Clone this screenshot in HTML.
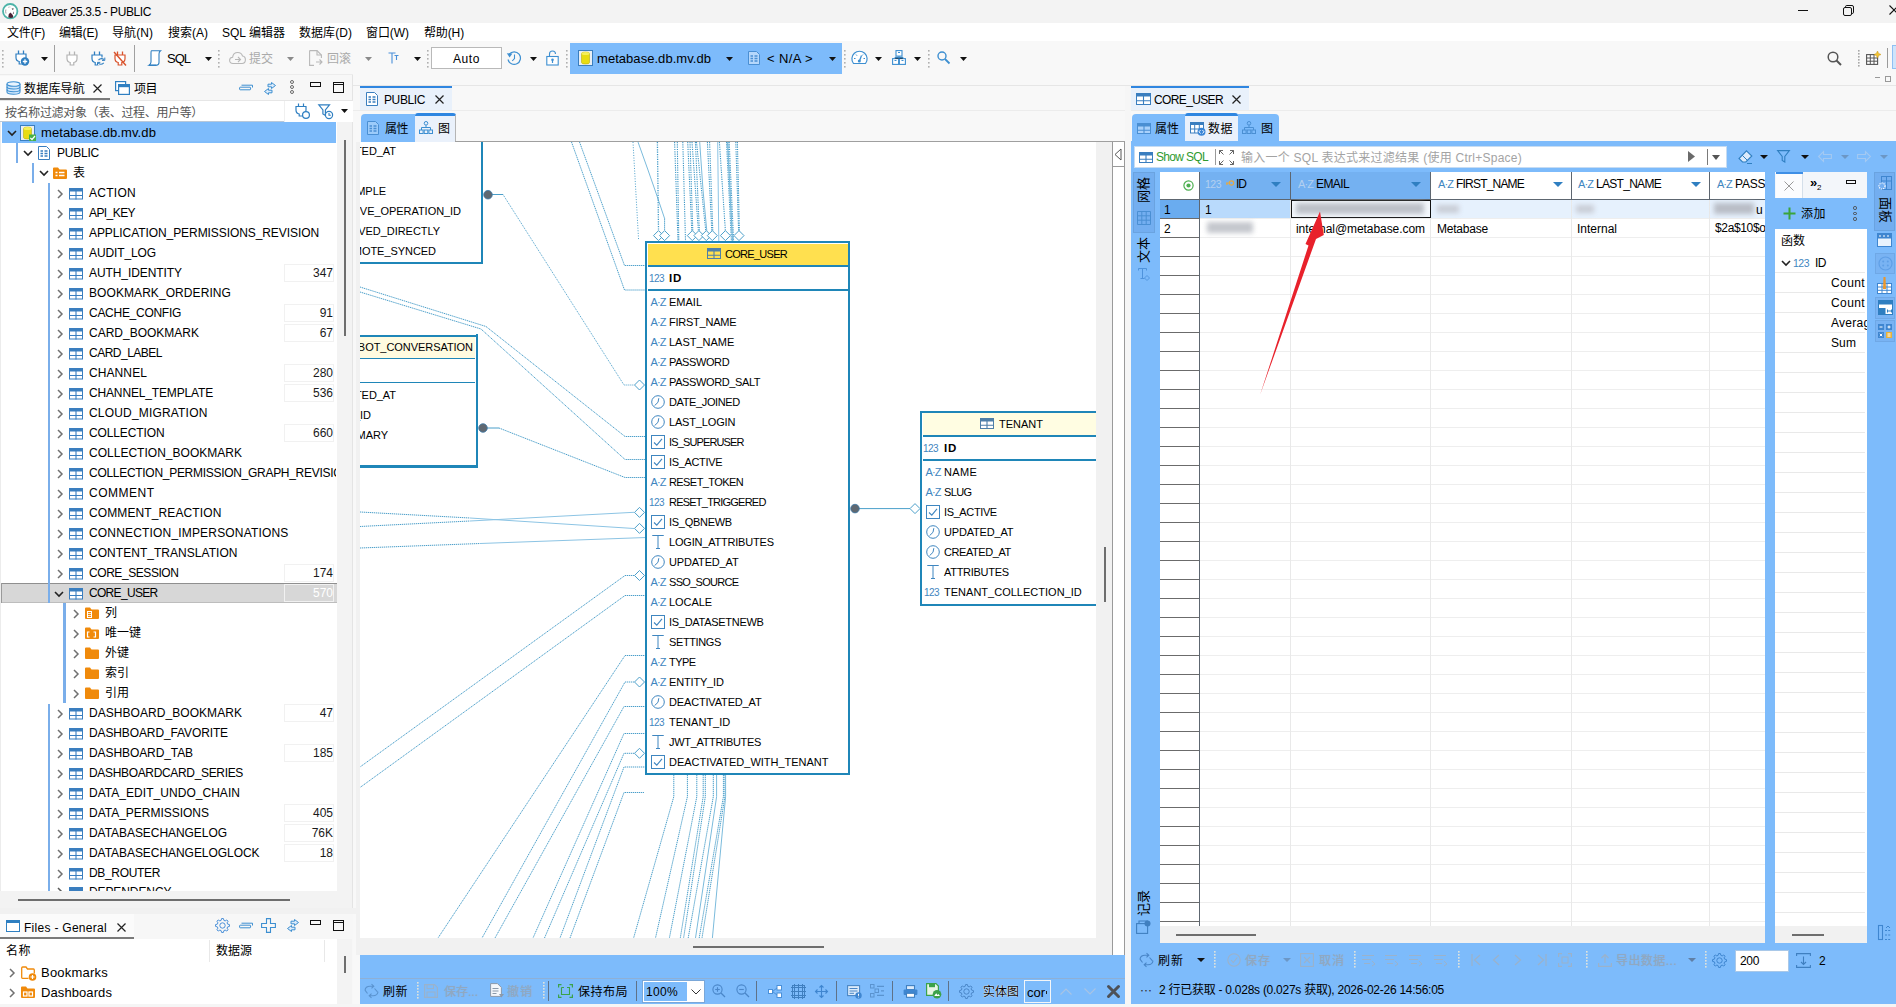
<!DOCTYPE html>
<html lang="zh-CN"><head><meta charset="utf-8"><title>DBeaver 25.3.5 - PUBLIC</title>
<style>
html,body{margin:0;padding:0}
body{width:1896px;height:1007px;overflow:hidden;position:relative;background:#f8f8f8;font-family:"Liberation Sans","Noto Sans CJK SC",sans-serif;font-size:12px}
body>div,body>span,body>svg{position:absolute}
span{white-space:pre}
svg{overflow:visible}
</style></head>
<body>
<div style="left:0px;top:0px;width:1896px;height:23px;background:#f3f3f3;"></div>
<svg style="left:2px;top:3px;" width="17" height="17" viewBox="0 0 17 17"><circle cx="8.2" cy="8.2" r="7.2" fill="#fff" stroke="#4db3a8" stroke-width="1.8"/><path d="M6.3 14.2Q6.2 11 8.3 9.6L10.2 11.2Q11.6 12.6 11 14.6Q8.5 15.6 6.3 14.2Z" fill="#4a2234"/><path d="M9.6 5.6L11.8 5.4L10.9 6.9Z" fill="#2a2226"/><path d="M10.6 10.5L12 8.3L12 11Z" fill="#7a6a70"/><path d="M3.9 6.5Q3.3 8.5 4 10.5" fill="none" stroke="#8a8a8a" stroke-width="0.8"/><path d="M6 4.5Q7.2 3.8 8.5 4" fill="none" stroke="#b0b0b0" stroke-width="0.7"/></svg>
<span style="top:4px;font-size:12px;line-height:16px;color:#000;left:23px;letter-spacing:-0.409px;">DBeaver 25.3.5 - PUBLIC</span>
<div style="left:1798px;top:10px;width:10px;height:1px;background:#111;"></div>
<svg style="left:1843px;top:5px;" width="11" height="11" viewBox="0 0 11 11"><rect x="0.5" y="2.5" width="8" height="8" rx="1.5" fill="none" stroke="#111" stroke-width="1"/><path d="M2.5 2.5V1.8Q2.5 0.5 3.8 0.5H9Q10.5 0.5 10.5 2V7.2Q10.5 8.5 9.2 8.5H8.5" fill="none" stroke="#111" stroke-width="1"/></svg>
<svg style="left:1889px;top:5px;" width="10" height="10" viewBox="0 0 10 10"><path d="M0.5 0.5L9.5 9.5M9.5 0.5L0.5 9.5" stroke="#111" stroke-width="1.1"/></svg>
<div style="left:0px;top:23px;width:1896px;height:18px;background:#fff;"></div>
<span style="top:25px;font-size:12px;line-height:16px;color:#000;left:7px;letter-spacing:-0.266px;">文件(F)</span>
<span style="top:25px;font-size:12px;line-height:16px;color:#000;left:59px;letter-spacing:-0.200px;">编辑(E)</span>
<span style="top:25px;font-size:12px;line-height:16px;color:#000;left:112px;letter-spacing:0.066px;">导航(N)</span>
<span style="top:25px;font-size:12px;line-height:16px;color:#000;left:168px;">搜索(A)</span>
<span style="top:25px;font-size:12px;line-height:16px;color:#000;left:222px;letter-spacing:0.013px;">SQL 编辑器</span>
<span style="top:25px;font-size:12px;line-height:16px;color:#000;left:299px;letter-spacing:0.055px;">数据库(D)</span>
<span style="top:25px;font-size:12px;line-height:16px;color:#000;left:366px;letter-spacing:-0.066px;">窗口(W)</span>
<span style="top:25px;font-size:12px;line-height:16px;color:#000;left:424px;letter-spacing:-0.134px;">帮助(H)</span>
<div style="left:0px;top:41px;width:1896px;height:44px;background:#f8f8f8;"></div>
<div style="left:0px;top:74px;width:353px;height:1px;background:#ececec;"></div>
<div style="left:353px;top:85px;width:1543px;height:1px;background:#e6e6e6;"></div>
<svg style="left:2px;top:50px;" width="2" height="18" viewBox="0 0 2 18"><rect x="0" y="0" width="1.6" height="1.6" fill="#b0b0b0"/><rect x="0" y="4" width="1.6" height="1.6" fill="#b0b0b0"/><rect x="0" y="8" width="1.6" height="1.6" fill="#b0b0b0"/><rect x="0" y="12" width="1.6" height="1.6" fill="#b0b0b0"/><rect x="0" y="16" width="1.6" height="1.6" fill="#b0b0b0"/></svg>
<svg style="left:15px;top:50px;" width="15" height="16" viewBox="0 0 15 16"><path d="M3.5 0.5V4M8.5 0.5V4" stroke="#2f7fc1" stroke-width="1.3"/><path d="M1 4H11V7.5Q11 11 7.8 11.5V14H4.2V11.5Q1 11 1 7.5Z" fill="#fff" stroke="#2f7fc1" stroke-width="1.2"/><circle cx="10" cy="11.5" r="4.2" fill="#2f7fc1"/><path d="M7.8 11.5H12.2M10 9.3V13.7" stroke="#fff" stroke-width="1.3"/></svg>
<svg style="left:41px;top:56.5px;" width="7" height="4" viewBox="0 0 7 4"><path d="M0 0H7L3.5 4Z" fill="#111"/></svg>
<div style="left:54px;top:45px;width:1px;height:27px;background:#a0a0a0;"></div>
<svg style="left:66px;top:51px;" width="15" height="16" viewBox="0 0 15 16"><path d="M3.5 0.5V4M8.5 0.5V4" stroke="#b4b4b4" stroke-width="1.3"/><path d="M1 4H11V7.5Q11 11 7.8 11.5V14H4.2V11.5Q1 11 1 7.5Z" fill="#fff" stroke="#b4b4b4" stroke-width="1.2"/></svg>
<svg style="left:91px;top:51px;" width="15" height="16" viewBox="0 0 15 16"><path d="M3.5 0.5V4M8.5 0.5V4" stroke="#2f7fc1" stroke-width="1.3"/><path d="M1 4H11V7.5Q11 11 7.8 11.5V14H4.2V11.5Q1 11 1 7.5Z" fill="#fff" stroke="#2f7fc1" stroke-width="1.2"/><rect x="6" y="6.5" width="8.5" height="8" fill="#f8f8f8"/><path d="M7.5 9Q10 6.5 13 8.5M12.8 11.8Q10 14.5 7.3 12.3" fill="none" stroke="#2f7fc1" stroke-width="1.1"/><path d="M13.8 6.6V9.4H11M6.5 14.2V11.4H9.3" fill="none" stroke="#2f7fc1" stroke-width="1"/></svg>
<svg style="left:114px;top:51px;" width="15" height="16" viewBox="0 0 15 16"><path d="M3.5 0.5V4M8.5 0.5V4" stroke="#d9532c" stroke-width="1.3"/><path d="M1 4H11V7.5Q11 11 7.8 11.5V14H4.2V11.5Q1 11 1 7.5Z" fill="#fff" stroke="#d9532c" stroke-width="1.2"/><path d="M0 1L12 14.5" stroke="#d9532c" stroke-width="1.4"/></svg>
<div style="left:134px;top:45px;width:1px;height:27px;background:#a0a0a0;"></div>
<svg style="left:148px;top:50px;" width="14" height="16" viewBox="0 0 14 16"><path d="M3.5 0.8H12.5Q11 2 11 4V12.5Q11 15 8.5 15.2H1Q3 14 3 12V3Q3 1 3.5 0.8Z" fill="#fff" stroke="#2f7fc1" stroke-width="1.1"/><path d="M1 15.2H8.5" stroke="#2f7fc1" stroke-width="1.3"/></svg>
<span style="top:51px;font-size:13px;line-height:16px;color:#000;left:167px;letter-spacing:-1.005px;">SQL</span>
<svg style="left:205px;top:56.5px;" width="7" height="4" viewBox="0 0 7 4"><path d="M0 0H7L3.5 4Z" fill="#111"/></svg>
<svg style="left:218px;top:50px;" width="2" height="18" viewBox="0 0 2 18"><rect x="0" y="0" width="1.6" height="1.6" fill="#b0b0b0"/><rect x="0" y="4" width="1.6" height="1.6" fill="#b0b0b0"/><rect x="0" y="8" width="1.6" height="1.6" fill="#b0b0b0"/><rect x="0" y="12" width="1.6" height="1.6" fill="#b0b0b0"/><rect x="0" y="16" width="1.6" height="1.6" fill="#b0b0b0"/></svg>
<svg style="left:229px;top:51px;" width="17" height="13" viewBox="0 0 17 13"><path d="M4 12.5Q0.6 12.5 0.6 9.3Q0.6 6.5 3.6 6.2Q4.2 1.5 8.8 1.5Q12.5 1.5 13.5 5Q16.4 5.4 16.4 8.8Q16.4 12.5 13 12.5Z" fill="none" stroke="#b8b8b8" stroke-width="1.1"/><path d="M6 8.5H11M9 6L11.5 8.5L9 11" fill="none" stroke="#b8b8b8" stroke-width="1.1"/></svg>
<span style="top:51px;font-size:12px;line-height:16px;color:#aaaaaa;left:249px;letter-spacing:-0.008px;">提交</span>
<svg style="left:287px;top:56.5px;" width="7" height="4" viewBox="0 0 7 4"><path d="M0 0H7L3.5 4Z" fill="#8a8a8a"/></svg>
<svg style="left:309px;top:50px;" width="14" height="16" viewBox="0 0 14 16"><path d="M0.6 0.6H8L12.4 5V8M0.6 0.6V15.4H5" fill="none" stroke="#b8b8b8" stroke-width="1.1"/><path d="M8 0.6V5H12.4" fill="none" stroke="#b8b8b8" stroke-width="1.1"/><path d="M7 12H12.5M10.5 9.5L13 12L10.5 14.5" fill="none" stroke="#b8b8b8" stroke-width="1.1"/></svg>
<span style="top:51px;font-size:12px;line-height:16px;color:#aaaaaa;left:327px;letter-spacing:-0.008px;">回滚</span>
<svg style="left:365px;top:56.5px;" width="7" height="4" viewBox="0 0 7 4"><path d="M0 0H7L3.5 4Z" fill="#8a8a8a"/></svg>
<svg style="left:388px;top:52px;" width="11" height="12" viewBox="0 0 11 12"><path d="M0.5 1H7.5M4 1V11.5M6.5 3.5H10.5M8.5 3.5V8" fill="none" stroke="#4a90d9" stroke-width="1.1"/></svg>
<svg style="left:414px;top:56.5px;" width="7" height="4" viewBox="0 0 7 4"><path d="M0 0H7L3.5 4Z" fill="#111"/></svg>
<svg style="left:427px;top:50px;" width="2" height="18" viewBox="0 0 2 18"><rect x="0" y="0" width="1.6" height="1.6" fill="#b0b0b0"/><rect x="0" y="4" width="1.6" height="1.6" fill="#b0b0b0"/><rect x="0" y="8" width="1.6" height="1.6" fill="#b0b0b0"/><rect x="0" y="12" width="1.6" height="1.6" fill="#b0b0b0"/><rect x="0" y="16" width="1.6" height="1.6" fill="#b0b0b0"/></svg>
<div style="left:431px;top:47px;width:71px;height:22px;background:#fff;border:1px solid #b9b9b9;box-sizing:border-box;"></div>
<span style="top:51px;font-size:12px;line-height:16px;color:#000;left:453px;letter-spacing:0.578px;">Auto</span>
<svg style="left:506px;top:50px;" width="16" height="16" viewBox="0 0 16 16"><path d="M3.2 4.2A6.3 6.3 0 1 1 2 9.5" fill="none" stroke="#3d8fd1" stroke-width="1.2"/><path d="M0.8 3.2L3.6 7.4L6.4 3.6Z" fill="#3d8fd1"/><path d="M8.5 4.5V8.5L6.2 11" fill="none" stroke="#3d8fd1" stroke-width="1.1"/></svg>
<svg style="left:530px;top:56.5px;" width="7" height="4" viewBox="0 0 7 4"><path d="M0 0H7L3.5 4Z" fill="#111"/></svg>
<svg style="left:546px;top:50px;" width="13" height="16" viewBox="0 0 13 16"><path d="M3.5 6.5V4Q3.5 1 6.5 1Q9.5 1 9.5 4" fill="none" stroke="#3d8fd1" stroke-width="1.1"/><rect x="0.8" y="6.5" width="11.4" height="8.5" fill="#fff" stroke="#3d8fd1" stroke-width="1.1"/><circle cx="6.5" cy="9.8" r="1.3" fill="#3d8fd1"/><path d="M6.5 10V13" stroke="#3d8fd1" stroke-width="1.2"/></svg>
<svg style="left:566px;top:50px;" width="2" height="18" viewBox="0 0 2 18"><rect x="0" y="0" width="1.6" height="1.6" fill="#b0b0b0"/><rect x="0" y="4" width="1.6" height="1.6" fill="#b0b0b0"/><rect x="0" y="8" width="1.6" height="1.6" fill="#b0b0b0"/><rect x="0" y="12" width="1.6" height="1.6" fill="#b0b0b0"/><rect x="0" y="16" width="1.6" height="1.6" fill="#b0b0b0"/></svg>
<div style="left:570px;top:43px;width:272px;height:31px;background:#7dbbfb;"></div>
<svg style="left:578px;top:50px;" width="16" height="16" viewBox="0 0 16 16"><rect x="0.5" y="0.5" width="14" height="15" fill="#e9eef3" stroke="#3a7ebf" stroke-width="1"/><path d="M3.5 3.5Q3.5 2 7.5 2Q11.5 2 11.5 3.5V12.5Q11.5 14 7.5 14Q3.5 14 3.5 12.5Z" fill="#e8dc12" stroke="#b9ae10" stroke-width="0.6"/><ellipse cx="7.5" cy="3.6" rx="4" ry="1.5" fill="#f5ef5a"/></svg>
<span style="top:51px;font-size:13px;line-height:16px;color:#000;left:597px;letter-spacing:0.046px;">metabase.db.mv.db</span>
<svg style="left:726px;top:56.5px;" width="7" height="4" viewBox="0 0 7 4"><path d="M0 0H7L3.5 4Z" fill="#111"/></svg>
<svg style="left:748px;top:51px;" width="12" height="14" viewBox="0 0 12 14"><path d="M0.5 0.5H8.5L11.5 3.5V13.5H0.5Z" fill="#b5d7fb" stroke="#4a8fd3" stroke-width="1"/><path d="M2.5 5H5M6.5 5H9.5M2.5 7.5H5M6.5 7.5H9.5M2.5 10H5M6.5 10H9.5" stroke="#4a8fd3" stroke-width="1.3"/></svg>
<span style="top:51px;font-size:13px;line-height:16px;color:#000;left:767px;letter-spacing:0.375px;">&lt; N/A &gt;</span>
<svg style="left:829px;top:56.5px;" width="7" height="4" viewBox="0 0 7 4"><path d="M0 0H7L3.5 4Z" fill="#111"/></svg>
<svg style="left:844px;top:50px;" width="2" height="18" viewBox="0 0 2 18"><rect x="0" y="0" width="1.6" height="1.6" fill="#b0b0b0"/><rect x="0" y="4" width="1.6" height="1.6" fill="#b0b0b0"/><rect x="0" y="8" width="1.6" height="1.6" fill="#b0b0b0"/><rect x="0" y="12" width="1.6" height="1.6" fill="#b0b0b0"/><rect x="0" y="16" width="1.6" height="1.6" fill="#b0b0b0"/></svg>
<svg style="left:851px;top:50px;" width="17" height="15" viewBox="0 0 17 15"><path d="M2.5 13.5A7.6 7.6 0 1 1 14.5 13.5Z" fill="#fff" stroke="#3d8fd1" stroke-width="1.2"/><path d="M8.5 11L10.5 5.5" stroke="#3d8fd1" stroke-width="1.3"/><circle cx="8.3" cy="11" r="1.5" fill="#3d8fd1"/><path d="M3 8.5H4.5M5 4.5L6 5.7M12 4.5L11.3 5.5M14 8.5H12.5" stroke="#3d8fd1" stroke-width="1"/></svg>
<svg style="left:875px;top:56.5px;" width="7" height="4" viewBox="0 0 7 4"><path d="M0 0H7L3.5 4Z" fill="#111"/></svg>
<svg style="left:892px;top:50px;" width="14" height="15" viewBox="0 0 14 15"><rect x="4" y="0.6" width="6" height="5.5" fill="#fff" stroke="#3d8fd1" stroke-width="1.1"/><rect x="0.6" y="8.6" width="6" height="5.8" fill="#fff" stroke="#3d8fd1" stroke-width="1.1"/><rect x="7.4" y="8.6" width="6" height="5.8" fill="#fff" stroke="#3d8fd1" stroke-width="1.1"/><path d="M7 6V8.5M3 8.5V7.3H11V8.5M6 2.5H8M2.5 10.5H4.5M9.5 10.5H11.5" stroke="#3d8fd1" stroke-width="1"/></svg>
<svg style="left:914px;top:56.5px;" width="7" height="4" viewBox="0 0 7 4"><path d="M0 0H7L3.5 4Z" fill="#111"/></svg>
<svg style="left:928px;top:50px;" width="2" height="18" viewBox="0 0 2 18"><rect x="0" y="0" width="1.6" height="1.6" fill="#b0b0b0"/><rect x="0" y="4" width="1.6" height="1.6" fill="#b0b0b0"/><rect x="0" y="8" width="1.6" height="1.6" fill="#b0b0b0"/><rect x="0" y="12" width="1.6" height="1.6" fill="#b0b0b0"/><rect x="0" y="16" width="1.6" height="1.6" fill="#b0b0b0"/></svg>
<svg style="left:937px;top:51px;" width="13" height="13" viewBox="0 0 13 13"><circle cx="5" cy="5" r="4" fill="none" stroke="#3d8fd1" stroke-width="1.4"/><path d="M8 8L12.5 12.5" stroke="#3d8fd1" stroke-width="1.8"/></svg>
<svg style="left:960px;top:56.5px;" width="7" height="4" viewBox="0 0 7 4"><path d="M0 0H7L3.5 4Z" fill="#111"/></svg>
<svg style="left:1827px;top:51px;" width="15" height="15" viewBox="0 0 15 15"><circle cx="6" cy="6" r="4.8" fill="none" stroke="#555" stroke-width="1.5"/><path d="M9.5 9.5L14 14" stroke="#555" stroke-width="2"/></svg>
<svg style="left:1858px;top:50px;" width="2" height="16" viewBox="0 0 2 16"><rect x="0" y="0" width="1.6" height="1.6" fill="#a8a8a8"/><rect x="0" y="3" width="1.6" height="1.6" fill="#a8a8a8"/><rect x="0" y="6" width="1.6" height="1.6" fill="#a8a8a8"/><rect x="0" y="9" width="1.6" height="1.6" fill="#a8a8a8"/><rect x="0" y="12" width="1.6" height="1.6" fill="#a8a8a8"/><rect x="0" y="15" width="1.6" height="1.6" fill="#a8a8a8"/></svg>
<svg style="left:1866px;top:51px;" width="15" height="14" viewBox="0 0 15 14"><rect x="0.6" y="3.6" width="11" height="9.8" fill="#fff" stroke="#555" stroke-width="1.1"/><path d="M0.6 7H11.6M0.6 10.2H11.6M4.3 3.6V13.4M8 3.6V13.4" stroke="#555" stroke-width="1"/><path d="M11.5 0L12.6 2.4L15 3.5L12.6 4.6L11.5 7L10.4 4.6L8 3.5L10.4 2.4Z" fill="#f2c230" stroke="#c89614" stroke-width="0.5"/></svg>
<div style="left:1887px;top:48px;width:1px;height:20px;background:#9a9a9a;"></div>
<div style="left:1892px;top:45px;width:6px;height:24px;background:#cfe4fb;border:1px solid #8fc0f3;box-sizing:border-box;"></div>
<div style="left:1875px;top:77px;width:5px;height:1px;background:#999;"></div>
<div style="left:1885px;top:76px;width:6px;height:6px;border:1px solid #999;box-sizing:border-box;"></div>
<div style="left:0px;top:75px;width:353px;height:833px;background:#f7f7f7;"></div>
<div style="left:352px;top:75px;width:1px;height:833px;background:#e4e4e4;"></div>
<div style="left:0px;top:76px;width:110px;height:23px;background:#fbfbfb;"></div>
<div style="left:0px;top:98px;width:110px;height:2px;background:#7a7a7a;"></div>
<svg style="left:6px;top:81px;" width="15" height="14" viewBox="0 0 15 14"><path d="M1 3V11Q1 13.2 7.5 13.2Q14 13.2 14 11V3" fill="#cfe6fb" stroke="#3d8fd1" stroke-width="1.1"/><ellipse cx="7.5" cy="3" rx="6.5" ry="2.3" fill="#e9f4fe" stroke="#3d8fd1" stroke-width="1.1"/><path d="M1 5.8Q1 8 7.5 8Q14 8 14 5.8M1 8.6Q1 10.8 7.5 10.8Q14 10.8 14 8.6" fill="none" stroke="#3d8fd1" stroke-width="1.1"/></svg>
<span style="top:80.5px;font-size:12px;line-height:16px;color:#000;left:24px;letter-spacing:0.197px;">数据库导航</span>
<svg style="left:93px;top:83.5px;" width="9" height="9" viewBox="0 0 9 9"><path d="M0.5 0.5L8.5 8.5M8.5 0.5L0.5 8.5" stroke="#222" stroke-width="1.2" fill="none"/></svg>
<svg style="left:115px;top:81px;" width="15" height="14" viewBox="0 0 15 14"><rect x="0.6" y="0.6" width="10" height="9" fill="#fff" stroke="#2f7fc1" stroke-width="1.2"/><rect x="3.6" y="3.6" width="10.8" height="9.8" fill="#fff" stroke="#2f7fc1" stroke-width="1.2"/><rect x="3.6" y="3.6" width="10.8" height="2.6" fill="#2f7fc1"/></svg>
<span style="top:80.5px;font-size:12px;line-height:16px;color:#000;left:134px;letter-spacing:-0.508px;">项目</span>
<svg style="left:239px;top:84px;" width="15" height="8" viewBox="0 0 15 8"><rect x="0.6" y="3.2" width="11" height="2.6" rx="0.6" fill="none" stroke="#3d8fd1" stroke-width="1"/><path d="M2.5 1.2H13.5V3.5" fill="none" stroke="#3d8fd1" stroke-width="1"/></svg>
<svg style="left:263px;top:82px;" width="14" height="13" viewBox="0 0 14 13"><path d="M5 2.2H8.5V0.5L12.5 3.5L8.5 6.5V4.8H5Z" fill="#dcebfa" stroke="#3d8fd1" stroke-width="1"/><path d="M9 8.2H5.5V6.5L1.5 9.5L5.5 12.5V10.8H9Z" fill="#dcebfa" stroke="#3d8fd1" stroke-width="1"/></svg>
<div style="left:290px;top:80px;width:4px;height:4px;border:1.2px solid #6a6a6a;box-sizing:border-box;border-radius:50%;"></div>
<div style="left:290px;top:85px;width:4px;height:4px;border:1.2px solid #6a6a6a;box-sizing:border-box;border-radius:50%;"></div>
<div style="left:290px;top:90px;width:4px;height:4px;border:1.2px solid #6a6a6a;box-sizing:border-box;border-radius:50%;"></div>
<div style="left:310px;top:82px;width:10.5px;height:4.5px;border:1.4px solid #111;box-sizing:border-box;"></div>
<div style="left:333px;top:82px;width:10.5px;height:10.5px;border:1.4px solid #111;box-sizing:border-box;"></div>
<div style="left:333px;top:83.5px;width:10.5px;height:1px;background:#111;"></div>
<div style="left:0px;top:101px;width:353px;height:21px;background:#fff;"></div>
<div style="left:0px;top:100px;width:353px;height:1px;background:#e6e6e6;"></div>
<div style="left:0px;top:121px;width:285px;height:1px;background:#b9c8d8;"></div>
<div style="left:284px;top:101px;width:1px;height:21px;background:#f0f0f0;"></div>
<span style="top:104.5px;font-size:12px;line-height:16px;color:#555;left:5px;letter-spacing:-0.354px;">按名称过滤对象（表、过程、用户等）</span>
<svg style="left:295px;top:103px;" width="16" height="17" viewBox="0 0 16 17"><path d="M3.5 0.5V3.5M8.5 0.5V3.5" stroke="#2f7fc1" stroke-width="1.2"/><path d="M1 3.5H11V7Q11 10.5 7.8 11V13H4.2V11Q1 10.5 1 7Z" fill="none" stroke="#2f7fc1" stroke-width="1.2"/><circle cx="11" cy="12" r="3.4" fill="#fff" stroke="#2f7fc1" stroke-width="1.2"/></svg>
<svg style="left:318px;top:104px;" width="18" height="17" viewBox="0 0 18 17"><path d="M0.8 0.8H11.5L7.4 6V11.5L4.9 10V6Z" fill="none" stroke="#2f7fc1" stroke-width="1.2"/><circle cx="11" cy="11" r="3.6" fill="#fff" stroke="#2f7fc1" stroke-width="1.2"/><path d="M11 9V11.3H12.8" fill="none" stroke="#2f7fc1" stroke-width="1.1"/></svg>
<svg style="left:341px;top:109px;" width="7" height="4" viewBox="0 0 7 4"><path d="M0 0H7L3.5 4Z" fill="#111"/></svg>
<div style="left:0px;top:122px;width:337px;height:769px;background:#fff;"></div>
<div style="left:337px;top:122px;width:15px;height:769px;background:#f3f3f3;"></div>
<div style="left:0px;top:122px;width:1px;height:769px;background:#ececec;"></div>
<div style="left:344px;top:140px;width:2px;height:196px;background:#6e6e6e;"></div>
<div style="left:2px;top:122px;width:334px;height:21px;background:#7dbbfb;"></div>
<div style="left:1px;top:583px;width:336px;height:20px;background:#d7d7d7;"></div>
<div style="left:1px;top:583px;width:336px;height:1px;background:#8f8f8f;"></div>
<div style="left:1px;top:602px;width:336px;height:1px;background:#bdbdbd;"></div>
<div style="left:1px;top:583px;width:1px;height:20px;background:#9a9a9a;"></div>
<div style="left:15.5px;top:143px;width:2.5px;height:20px;background:#7aaeea;"></div>
<div style="left:31.5px;top:163px;width:2.5px;height:20px;background:#7aaeea;"></div>
<div style="left:47.5px;top:183px;width:2.5px;height:419.5px;background:#7aaeea;"></div>
<div style="left:47.5px;top:703.5px;width:2.5px;height:187.5px;background:#7aaeea;"></div>
<div style="left:63.3px;top:603px;width:2.5px;height:99.5px;background:#7aaeea;"></div>
<svg style="left:7px;top:129.5px;" width="10" height="6" viewBox="0 0 10 6"><path d="M1 1L5 5L9 1" fill="none" stroke="#222" stroke-width="1.6"/></svg>
<svg style="left:20px;top:125px;" width="16" height="16" viewBox="0 0 16 16"><rect x="0.5" y="0.5" width="14" height="15" fill="#e9eef3" stroke="#3a7ebf" stroke-width="1"/><path d="M3.5 3.5Q3.5 2 7.5 2Q11.5 2 11.5 3.5V12.5Q11.5 14 7.5 14Q3.5 14 3.5 12.5Z" fill="#e8dc12" stroke="#b9ae10" stroke-width="0.6"/><ellipse cx="7.5" cy="3.6" rx="4" ry="1.5" fill="#f5ef5a"/><rect x="9" y="9.5" width="7" height="6.5" fill="#45b04a"/><path d="M10.3 12.8L12 14.5L15 11" stroke="#fff" stroke-width="1.2" fill="none"/></svg>
<span style="top:124.5px;font-size:13px;line-height:16px;color:#000;left:41px;letter-spacing:0.105px;">metabase.db.mv.db</span>
<svg style="left:23px;top:149.5px;" width="10" height="6" viewBox="0 0 10 6"><path d="M1 1L5 5L9 1" fill="none" stroke="#222" stroke-width="1.6"/></svg>
<svg style="left:38px;top:146px;" width="12" height="14" viewBox="0 0 12 14"><path d="M0.5 0.5H8.5L11.5 3.5V13.5H0.5Z" fill="#fff" stroke="#3a7ebf" stroke-width="1"/><path d="M2.5 5H5M6.5 5H9.5M2.5 7.5H5M6.5 7.5H9.5M2.5 10H5M6.5 10H9.5" stroke="#3a7ebf" stroke-width="1.3"/></svg>
<span style="top:144.5px;font-size:12px;line-height:16px;color:#000;left:57px;letter-spacing:-0.227px;">PUBLIC</span>
<svg style="left:39px;top:169.5px;" width="10" height="6" viewBox="0 0 10 6"><path d="M1 1L5 5L9 1" fill="none" stroke="#222" stroke-width="1.6"/></svg>
<svg style="left:53px;top:167px;" width="14" height="12" viewBox="0 0 14 12"><path d="M0 1.5Q0 0.5 1 0.5H5L6.5 2.5H13Q14 2.5 14 3.5V11Q14 12 13 12H1Q0 12 0 11Z" fill="#f08a0b"/><path d="M2.5 5.5H4.5M6 5.5H11.5M2.5 8.5H4.5M6 8.5H11.5" stroke="#fff" stroke-width="1.6"/></svg>
<span style="top:164.5px;font-size:12px;line-height:16px;color:#000;left:73px;">表</span>
<svg style="left:57px;top:188.5px;" width="6" height="10" viewBox="0 0 6 10"><path d="M1 1L5 5L1 9" fill="none" stroke="#707070" stroke-width="1.5"/></svg>
<svg style="left:69px;top:187.5px;" width="14" height="11.5" viewBox="0 0 14 11.5"><rect x="0.5" y="0.5" width="13" height="10.5" fill="#fff" stroke="#3a7ebf"/><rect x="0" y="0" width="14" height="3.5" fill="#3a7ebf"/><path d="M0 7.5H14M7 3V11.5" stroke="#3a7ebf" stroke-width="1.1" fill="none"/></svg>
<span style="top:184.5px;font-size:12px;line-height:16px;color:#000;left:89px;letter-spacing:0.276px;">ACTION</span>
<svg style="left:57px;top:208.5px;" width="6" height="10" viewBox="0 0 6 10"><path d="M1 1L5 5L1 9" fill="none" stroke="#707070" stroke-width="1.5"/></svg>
<svg style="left:69px;top:207.5px;" width="14" height="11.5" viewBox="0 0 14 11.5"><rect x="0.5" y="0.5" width="13" height="10.5" fill="#fff" stroke="#3a7ebf"/><rect x="0" y="0" width="14" height="3.5" fill="#3a7ebf"/><path d="M0 7.5H14M7 3V11.5" stroke="#3a7ebf" stroke-width="1.1" fill="none"/></svg>
<span style="top:204.5px;font-size:12px;line-height:16px;color:#000;left:89px;letter-spacing:-0.576px;">API_KEY</span>
<svg style="left:57px;top:228.5px;" width="6" height="10" viewBox="0 0 6 10"><path d="M1 1L5 5L1 9" fill="none" stroke="#707070" stroke-width="1.5"/></svg>
<svg style="left:69px;top:227.5px;" width="14" height="11.5" viewBox="0 0 14 11.5"><rect x="0.5" y="0.5" width="13" height="10.5" fill="#fff" stroke="#3a7ebf"/><rect x="0" y="0" width="14" height="3.5" fill="#3a7ebf"/><path d="M0 7.5H14M7 3V11.5" stroke="#3a7ebf" stroke-width="1.1" fill="none"/></svg>
<span style="top:224.5px;font-size:12px;line-height:16px;color:#000;left:89px;letter-spacing:-0.079px;">APPLICATION_PERMISSIONS_REVISION</span>
<svg style="left:57px;top:248.5px;" width="6" height="10" viewBox="0 0 6 10"><path d="M1 1L5 5L1 9" fill="none" stroke="#707070" stroke-width="1.5"/></svg>
<svg style="left:69px;top:247.5px;" width="14" height="11.5" viewBox="0 0 14 11.5"><rect x="0.5" y="0.5" width="13" height="10.5" fill="#fff" stroke="#3a7ebf"/><rect x="0" y="0" width="14" height="3.5" fill="#3a7ebf"/><path d="M0 7.5H14M7 3V11.5" stroke="#3a7ebf" stroke-width="1.1" fill="none"/></svg>
<span style="top:244.5px;font-size:12px;line-height:16px;color:#000;left:89px;letter-spacing:-0.113px;">AUDIT_LOG</span>
<svg style="left:57px;top:268.5px;" width="6" height="10" viewBox="0 0 6 10"><path d="M1 1L5 5L1 9" fill="none" stroke="#707070" stroke-width="1.5"/></svg>
<svg style="left:69px;top:267.5px;" width="14" height="11.5" viewBox="0 0 14 11.5"><rect x="0.5" y="0.5" width="13" height="10.5" fill="#fff" stroke="#3a7ebf"/><rect x="0" y="0" width="14" height="3.5" fill="#3a7ebf"/><path d="M0 7.5H14M7 3V11.5" stroke="#3a7ebf" stroke-width="1.1" fill="none"/></svg>
<span style="top:264.5px;font-size:12px;line-height:16px;color:#000;left:89px;letter-spacing:-0.078px;">AUTH_IDENTITY</span>
<div style="left:284px;top:264px;width:50px;height:18px;border:1px solid #f1f1f1;box-sizing:border-box;"></div>
<span style="top:264.5px;font-size:12px;line-height:16px;color:#1a1a1a;right:1563px;">347</span>
<svg style="left:57px;top:288.5px;" width="6" height="10" viewBox="0 0 6 10"><path d="M1 1L5 5L1 9" fill="none" stroke="#707070" stroke-width="1.5"/></svg>
<svg style="left:69px;top:287.5px;" width="14" height="11.5" viewBox="0 0 14 11.5"><rect x="0.5" y="0.5" width="13" height="10.5" fill="#fff" stroke="#3a7ebf"/><rect x="0" y="0" width="14" height="3.5" fill="#3a7ebf"/><path d="M0 7.5H14M7 3V11.5" stroke="#3a7ebf" stroke-width="1.1" fill="none"/></svg>
<span style="top:284.5px;font-size:12px;line-height:16px;color:#000;left:89px;letter-spacing:0.076px;">BOOKMARK_ORDERING</span>
<svg style="left:57px;top:308.5px;" width="6" height="10" viewBox="0 0 6 10"><path d="M1 1L5 5L1 9" fill="none" stroke="#707070" stroke-width="1.5"/></svg>
<svg style="left:69px;top:307.5px;" width="14" height="11.5" viewBox="0 0 14 11.5"><rect x="0.5" y="0.5" width="13" height="10.5" fill="#fff" stroke="#3a7ebf"/><rect x="0" y="0" width="14" height="3.5" fill="#3a7ebf"/><path d="M0 7.5H14M7 3V11.5" stroke="#3a7ebf" stroke-width="1.1" fill="none"/></svg>
<span style="top:304.5px;font-size:12px;line-height:16px;color:#000;left:89px;letter-spacing:-0.279px;">CACHE_CONFIG</span>
<div style="left:284px;top:304px;width:50px;height:18px;border:1px solid #f1f1f1;box-sizing:border-box;"></div>
<span style="top:304.5px;font-size:12px;line-height:16px;color:#1a1a1a;right:1563px;">91</span>
<svg style="left:57px;top:328.5px;" width="6" height="10" viewBox="0 0 6 10"><path d="M1 1L5 5L1 9" fill="none" stroke="#707070" stroke-width="1.5"/></svg>
<svg style="left:69px;top:327.5px;" width="14" height="11.5" viewBox="0 0 14 11.5"><rect x="0.5" y="0.5" width="13" height="10.5" fill="#fff" stroke="#3a7ebf"/><rect x="0" y="0" width="14" height="3.5" fill="#3a7ebf"/><path d="M0 7.5H14M7 3V11.5" stroke="#3a7ebf" stroke-width="1.1" fill="none"/></svg>
<span style="top:324.5px;font-size:12px;line-height:16px;color:#000;left:89px;">CARD_BOOKMARK</span>
<div style="left:284px;top:324px;width:50px;height:18px;border:1px solid #f1f1f1;box-sizing:border-box;"></div>
<span style="top:324.5px;font-size:12px;line-height:16px;color:#1a1a1a;right:1563px;">67</span>
<svg style="left:57px;top:348.5px;" width="6" height="10" viewBox="0 0 6 10"><path d="M1 1L5 5L1 9" fill="none" stroke="#707070" stroke-width="1.5"/></svg>
<svg style="left:69px;top:347.5px;" width="14" height="11.5" viewBox="0 0 14 11.5"><rect x="0.5" y="0.5" width="13" height="10.5" fill="#fff" stroke="#3a7ebf"/><rect x="0" y="0" width="14" height="3.5" fill="#3a7ebf"/><path d="M0 7.5H14M7 3V11.5" stroke="#3a7ebf" stroke-width="1.1" fill="none"/></svg>
<span style="top:344.5px;font-size:12px;line-height:16px;color:#000;left:89px;letter-spacing:-0.505px;">CARD_LABEL</span>
<svg style="left:57px;top:368.5px;" width="6" height="10" viewBox="0 0 6 10"><path d="M1 1L5 5L1 9" fill="none" stroke="#707070" stroke-width="1.5"/></svg>
<svg style="left:69px;top:367.5px;" width="14" height="11.5" viewBox="0 0 14 11.5"><rect x="0.5" y="0.5" width="13" height="10.5" fill="#fff" stroke="#3a7ebf"/><rect x="0" y="0" width="14" height="3.5" fill="#3a7ebf"/><path d="M0 7.5H14M7 3V11.5" stroke="#3a7ebf" stroke-width="1.1" fill="none"/></svg>
<span style="top:364.5px;font-size:12px;line-height:16px;color:#000;left:89px;letter-spacing:0.092px;">CHANNEL</span>
<div style="left:284px;top:364px;width:50px;height:18px;border:1px solid #f1f1f1;box-sizing:border-box;"></div>
<span style="top:364.5px;font-size:12px;line-height:16px;color:#1a1a1a;right:1563px;">280</span>
<svg style="left:57px;top:388.5px;" width="6" height="10" viewBox="0 0 6 10"><path d="M1 1L5 5L1 9" fill="none" stroke="#707070" stroke-width="1.5"/></svg>
<svg style="left:69px;top:387.5px;" width="14" height="11.5" viewBox="0 0 14 11.5"><rect x="0.5" y="0.5" width="13" height="10.5" fill="#fff" stroke="#3a7ebf"/><rect x="0" y="0" width="14" height="3.5" fill="#3a7ebf"/><path d="M0 7.5H14M7 3V11.5" stroke="#3a7ebf" stroke-width="1.1" fill="none"/></svg>
<span style="top:384.5px;font-size:12px;line-height:16px;color:#000;left:89px;letter-spacing:-0.155px;">CHANNEL_TEMPLATE</span>
<div style="left:284px;top:384px;width:50px;height:18px;border:1px solid #f1f1f1;box-sizing:border-box;"></div>
<span style="top:384.5px;font-size:12px;line-height:16px;color:#1a1a1a;right:1563px;">536</span>
<svg style="left:57px;top:408.5px;" width="6" height="10" viewBox="0 0 6 10"><path d="M1 1L5 5L1 9" fill="none" stroke="#707070" stroke-width="1.5"/></svg>
<svg style="left:69px;top:407.5px;" width="14" height="11.5" viewBox="0 0 14 11.5"><rect x="0.5" y="0.5" width="13" height="10.5" fill="#fff" stroke="#3a7ebf"/><rect x="0" y="0" width="14" height="3.5" fill="#3a7ebf"/><path d="M0 7.5H14M7 3V11.5" stroke="#3a7ebf" stroke-width="1.1" fill="none"/></svg>
<span style="top:404.5px;font-size:12px;line-height:16px;color:#000;left:89px;letter-spacing:0.180px;">CLOUD_MIGRATION</span>
<svg style="left:57px;top:428.5px;" width="6" height="10" viewBox="0 0 6 10"><path d="M1 1L5 5L1 9" fill="none" stroke="#707070" stroke-width="1.5"/></svg>
<svg style="left:69px;top:427.5px;" width="14" height="11.5" viewBox="0 0 14 11.5"><rect x="0.5" y="0.5" width="13" height="10.5" fill="#fff" stroke="#3a7ebf"/><rect x="0" y="0" width="14" height="3.5" fill="#3a7ebf"/><path d="M0 7.5H14M7 3V11.5" stroke="#3a7ebf" stroke-width="1.1" fill="none"/></svg>
<span style="top:424.5px;font-size:12px;line-height:16px;color:#000;left:89px;letter-spacing:-0.119px;">COLLECTION</span>
<div style="left:284px;top:424px;width:50px;height:18px;border:1px solid #f1f1f1;box-sizing:border-box;"></div>
<span style="top:424.5px;font-size:12px;line-height:16px;color:#1a1a1a;right:1563px;">660</span>
<svg style="left:57px;top:448.5px;" width="6" height="10" viewBox="0 0 6 10"><path d="M1 1L5 5L1 9" fill="none" stroke="#707070" stroke-width="1.5"/></svg>
<svg style="left:69px;top:447.5px;" width="14" height="11.5" viewBox="0 0 14 11.5"><rect x="0.5" y="0.5" width="13" height="10.5" fill="#fff" stroke="#3a7ebf"/><rect x="0" y="0" width="14" height="3.5" fill="#3a7ebf"/><path d="M0 7.5H14M7 3V11.5" stroke="#3a7ebf" stroke-width="1.1" fill="none"/></svg>
<span style="top:444.5px;font-size:12px;line-height:16px;color:#000;left:89px;letter-spacing:0.016px;">COLLECTION_BOOKMARK</span>
<svg style="left:57px;top:468.5px;" width="6" height="10" viewBox="0 0 6 10"><path d="M1 1L5 5L1 9" fill="none" stroke="#707070" stroke-width="1.5"/></svg>
<svg style="left:69px;top:467.5px;" width="14" height="11.5" viewBox="0 0 14 11.5"><rect x="0.5" y="0.5" width="13" height="10.5" fill="#fff" stroke="#3a7ebf"/><rect x="0" y="0" width="14" height="3.5" fill="#3a7ebf"/><path d="M0 7.5H14M7 3V11.5" stroke="#3a7ebf" stroke-width="1.1" fill="none"/></svg>
<div style="left:89px;top:464.5px;width:247px;height:16px;overflow:hidden"><span style="position:absolute;left:0;top:0;font-size:12px;line-height:16px;letter-spacing:-0.29px;white-space:pre">COLLECTION_PERMISSION_GRAPH_REVISION</span></div>
<svg style="left:57px;top:488.5px;" width="6" height="10" viewBox="0 0 6 10"><path d="M1 1L5 5L1 9" fill="none" stroke="#707070" stroke-width="1.5"/></svg>
<svg style="left:69px;top:487.5px;" width="14" height="11.5" viewBox="0 0 14 11.5"><rect x="0.5" y="0.5" width="13" height="10.5" fill="#fff" stroke="#3a7ebf"/><rect x="0" y="0" width="14" height="3.5" fill="#3a7ebf"/><path d="M0 7.5H14M7 3V11.5" stroke="#3a7ebf" stroke-width="1.1" fill="none"/></svg>
<span style="top:484.5px;font-size:12px;line-height:16px;color:#000;left:89px;letter-spacing:0.500px;">COMMENT</span>
<svg style="left:57px;top:508.5px;" width="6" height="10" viewBox="0 0 6 10"><path d="M1 1L5 5L1 9" fill="none" stroke="#707070" stroke-width="1.5"/></svg>
<svg style="left:69px;top:507.5px;" width="14" height="11.5" viewBox="0 0 14 11.5"><rect x="0.5" y="0.5" width="13" height="10.5" fill="#fff" stroke="#3a7ebf"/><rect x="0" y="0" width="14" height="3.5" fill="#3a7ebf"/><path d="M0 7.5H14M7 3V11.5" stroke="#3a7ebf" stroke-width="1.1" fill="none"/></svg>
<span style="top:504.5px;font-size:12px;line-height:16px;color:#000;left:89px;letter-spacing:0.114px;">COMMENT_REACTION</span>
<svg style="left:57px;top:528.5px;" width="6" height="10" viewBox="0 0 6 10"><path d="M1 1L5 5L1 9" fill="none" stroke="#707070" stroke-width="1.5"/></svg>
<svg style="left:69px;top:527.5px;" width="14" height="11.5" viewBox="0 0 14 11.5"><rect x="0.5" y="0.5" width="13" height="10.5" fill="#fff" stroke="#3a7ebf"/><rect x="0" y="0" width="14" height="3.5" fill="#3a7ebf"/><path d="M0 7.5H14M7 3V11.5" stroke="#3a7ebf" stroke-width="1.1" fill="none"/></svg>
<span style="top:524.5px;font-size:12px;line-height:16px;color:#000;left:89px;letter-spacing:0.174px;">CONNECTION_IMPERSONATIONS</span>
<svg style="left:57px;top:548.5px;" width="6" height="10" viewBox="0 0 6 10"><path d="M1 1L5 5L1 9" fill="none" stroke="#707070" stroke-width="1.5"/></svg>
<svg style="left:69px;top:547.5px;" width="14" height="11.5" viewBox="0 0 14 11.5"><rect x="0.5" y="0.5" width="13" height="10.5" fill="#fff" stroke="#3a7ebf"/><rect x="0" y="0" width="14" height="3.5" fill="#3a7ebf"/><path d="M0 7.5H14M7 3V11.5" stroke="#3a7ebf" stroke-width="1.1" fill="none"/></svg>
<span style="top:544.5px;font-size:12px;line-height:16px;color:#000;left:89px;letter-spacing:0.037px;">CONTENT_TRANSLATION</span>
<svg style="left:57px;top:568.5px;" width="6" height="10" viewBox="0 0 6 10"><path d="M1 1L5 5L1 9" fill="none" stroke="#707070" stroke-width="1.5"/></svg>
<svg style="left:69px;top:567.5px;" width="14" height="11.5" viewBox="0 0 14 11.5"><rect x="0.5" y="0.5" width="13" height="10.5" fill="#fff" stroke="#3a7ebf"/><rect x="0" y="0" width="14" height="3.5" fill="#3a7ebf"/><path d="M0 7.5H14M7 3V11.5" stroke="#3a7ebf" stroke-width="1.1" fill="none"/></svg>
<span style="top:564.5px;font-size:12px;line-height:16px;color:#000;left:89px;letter-spacing:-0.434px;">CORE_SESSION</span>
<div style="left:284px;top:564px;width:50px;height:18px;border:1px solid #f1f1f1;box-sizing:border-box;"></div>
<span style="top:564.5px;font-size:12px;line-height:16px;color:#1a1a1a;right:1563px;">174</span>
<svg style="left:54px;top:590.5px;" width="10" height="6" viewBox="0 0 10 6"><path d="M1 1L5 5L9 1" fill="none" stroke="#222" stroke-width="1.6"/></svg>
<svg style="left:69px;top:587.5px;" width="14" height="11.5" viewBox="0 0 14 11.5"><rect x="0.5" y="0.5" width="13" height="10.5" fill="#fff" stroke="#3a7ebf"/><rect x="0" y="0" width="14" height="3.5" fill="#3a7ebf"/><path d="M0 7.5H14M7 3V11.5" stroke="#3a7ebf" stroke-width="1.1" fill="none"/></svg>
<span style="top:584.5px;font-size:12px;line-height:16px;color:#000;left:89px;letter-spacing:-0.688px;">CORE_USER</span>
<div style="left:284px;top:584px;width:50px;height:18px;border:1px solid #f1f1f1;box-sizing:border-box;"></div>
<span style="top:584.5px;font-size:12px;line-height:16px;color:#fff;right:1563px;">570</span>
<svg style="left:73px;top:608.5px;" width="6" height="10" viewBox="0 0 6 10"><path d="M1 1L5 5L1 9" fill="none" stroke="#707070" stroke-width="1.5"/></svg>
<svg style="left:85px;top:606.5px;" width="14" height="12" viewBox="0 0 14 12"><path d="M0 1.5Q0 0.5 1 0.5H5L6.5 2.5H13Q14 2.5 14 3.5V11Q14 12 13 12H1Q0 12 0 11Z" fill="#f08a0b"/><rect x="2.5" y="4.5" width="4" height="6" fill="none" stroke="#fff" stroke-width="1"/><path d="M2.5 6.5H6.5M2.5 8.5H6.5" stroke="#fff" stroke-width="0.8"/></svg>
<span style="top:604.5px;font-size:12px;line-height:16px;color:#000;left:105px;">列</span>
<svg style="left:73px;top:628.5px;" width="6" height="10" viewBox="0 0 6 10"><path d="M1 1L5 5L1 9" fill="none" stroke="#707070" stroke-width="1.5"/></svg>
<svg style="left:85px;top:626.5px;" width="14" height="12" viewBox="0 0 14 12"><path d="M0 1.5Q0 0.5 1 0.5H5L6.5 2.5H13Q14 2.5 14 3.5V11Q14 12 13 12H1Q0 12 0 11Z" fill="#f08a0b"/><path d="M4.5 5H2.5V10H4.5M8.5 5H10.5V10H8.5" fill="none" stroke="#fff" stroke-width="1.2"/></svg>
<span style="top:624.5px;font-size:12px;line-height:16px;color:#000;left:105px;">唯一键</span>
<svg style="left:73px;top:648.5px;" width="6" height="10" viewBox="0 0 6 10"><path d="M1 1L5 5L1 9" fill="none" stroke="#707070" stroke-width="1.5"/></svg>
<svg style="left:85px;top:646.5px;" width="14" height="12" viewBox="0 0 14 12"><path d="M0 1.5Q0 0.5 1 0.5H5L6.5 2.5H13Q14 2.5 14 3.5V11Q14 12 13 12H1Q0 12 0 11Z" fill="#f08a0b"/></svg>
<span style="top:644.5px;font-size:12px;line-height:16px;color:#000;left:105px;">外键</span>
<svg style="left:73px;top:668.5px;" width="6" height="10" viewBox="0 0 6 10"><path d="M1 1L5 5L1 9" fill="none" stroke="#707070" stroke-width="1.5"/></svg>
<svg style="left:85px;top:666.5px;" width="14" height="12" viewBox="0 0 14 12"><path d="M0 1.5Q0 0.5 1 0.5H5L6.5 2.5H13Q14 2.5 14 3.5V11Q14 12 13 12H1Q0 12 0 11Z" fill="#f08a0b"/></svg>
<span style="top:664.5px;font-size:12px;line-height:16px;color:#000;left:105px;">索引</span>
<svg style="left:73px;top:688.5px;" width="6" height="10" viewBox="0 0 6 10"><path d="M1 1L5 5L1 9" fill="none" stroke="#707070" stroke-width="1.5"/></svg>
<svg style="left:85px;top:686.5px;" width="14" height="12" viewBox="0 0 14 12"><path d="M0 1.5Q0 0.5 1 0.5H5L6.5 2.5H13Q14 2.5 14 3.5V11Q14 12 13 12H1Q0 12 0 11Z" fill="#f08a0b"/></svg>
<span style="top:684.5px;font-size:12px;line-height:16px;color:#000;left:105px;">引用</span>
<svg style="left:57px;top:708.5px;" width="6" height="10" viewBox="0 0 6 10"><path d="M1 1L5 5L1 9" fill="none" stroke="#707070" stroke-width="1.5"/></svg>
<svg style="left:69px;top:707.5px;" width="14" height="11.5" viewBox="0 0 14 11.5"><rect x="0.5" y="0.5" width="13" height="10.5" fill="#fff" stroke="#3a7ebf"/><rect x="0" y="0" width="14" height="3.5" fill="#3a7ebf"/><path d="M0 7.5H14M7 3V11.5" stroke="#3a7ebf" stroke-width="1.1" fill="none"/></svg>
<span style="top:704.5px;font-size:12px;line-height:16px;color:#000;left:89px;letter-spacing:0.053px;">DASHBOARD_BOOKMARK</span>
<div style="left:284px;top:704px;width:50px;height:18px;border:1px solid #f1f1f1;box-sizing:border-box;"></div>
<span style="top:704.5px;font-size:12px;line-height:16px;color:#1a1a1a;right:1563px;">47</span>
<svg style="left:57px;top:728.5px;" width="6" height="10" viewBox="0 0 6 10"><path d="M1 1L5 5L1 9" fill="none" stroke="#707070" stroke-width="1.5"/></svg>
<svg style="left:69px;top:727.5px;" width="14" height="11.5" viewBox="0 0 14 11.5"><rect x="0.5" y="0.5" width="13" height="10.5" fill="#fff" stroke="#3a7ebf"/><rect x="0" y="0" width="14" height="3.5" fill="#3a7ebf"/><path d="M0 7.5H14M7 3V11.5" stroke="#3a7ebf" stroke-width="1.1" fill="none"/></svg>
<span style="top:724.5px;font-size:12px;line-height:16px;color:#000;left:89px;letter-spacing:-0.119px;">DASHBOARD_FAVORITE</span>
<svg style="left:57px;top:748.5px;" width="6" height="10" viewBox="0 0 6 10"><path d="M1 1L5 5L1 9" fill="none" stroke="#707070" stroke-width="1.5"/></svg>
<svg style="left:69px;top:747.5px;" width="14" height="11.5" viewBox="0 0 14 11.5"><rect x="0.5" y="0.5" width="13" height="10.5" fill="#fff" stroke="#3a7ebf"/><rect x="0" y="0" width="14" height="3.5" fill="#3a7ebf"/><path d="M0 7.5H14M7 3V11.5" stroke="#3a7ebf" stroke-width="1.1" fill="none"/></svg>
<span style="top:744.5px;font-size:12px;line-height:16px;color:#000;left:89px;letter-spacing:-0.088px;">DASHBOARD_TAB</span>
<div style="left:284px;top:744px;width:50px;height:18px;border:1px solid #f1f1f1;box-sizing:border-box;"></div>
<span style="top:744.5px;font-size:12px;line-height:16px;color:#1a1a1a;right:1563px;">185</span>
<svg style="left:57px;top:768.5px;" width="6" height="10" viewBox="0 0 6 10"><path d="M1 1L5 5L1 9" fill="none" stroke="#707070" stroke-width="1.5"/></svg>
<svg style="left:69px;top:767.5px;" width="14" height="11.5" viewBox="0 0 14 11.5"><rect x="0.5" y="0.5" width="13" height="10.5" fill="#fff" stroke="#3a7ebf"/><rect x="0" y="0" width="14" height="3.5" fill="#3a7ebf"/><path d="M0 7.5H14M7 3V11.5" stroke="#3a7ebf" stroke-width="1.1" fill="none"/></svg>
<span style="top:764.5px;font-size:12px;line-height:16px;color:#000;left:89px;letter-spacing:-0.336px;">DASHBOARDCARD_SERIES</span>
<svg style="left:57px;top:788.5px;" width="6" height="10" viewBox="0 0 6 10"><path d="M1 1L5 5L1 9" fill="none" stroke="#707070" stroke-width="1.5"/></svg>
<svg style="left:69px;top:787.5px;" width="14" height="11.5" viewBox="0 0 14 11.5"><rect x="0.5" y="0.5" width="13" height="10.5" fill="#fff" stroke="#3a7ebf"/><rect x="0" y="0" width="14" height="3.5" fill="#3a7ebf"/><path d="M0 7.5H14M7 3V11.5" stroke="#3a7ebf" stroke-width="1.1" fill="none"/></svg>
<span style="top:784.5px;font-size:12px;line-height:16px;color:#000;left:89px;letter-spacing:0.037px;">DATA_EDIT_UNDO_CHAIN</span>
<svg style="left:57px;top:808.5px;" width="6" height="10" viewBox="0 0 6 10"><path d="M1 1L5 5L1 9" fill="none" stroke="#707070" stroke-width="1.5"/></svg>
<svg style="left:69px;top:807.5px;" width="14" height="11.5" viewBox="0 0 14 11.5"><rect x="0.5" y="0.5" width="13" height="10.5" fill="#fff" stroke="#3a7ebf"/><rect x="0" y="0" width="14" height="3.5" fill="#3a7ebf"/><path d="M0 7.5H14M7 3V11.5" stroke="#3a7ebf" stroke-width="1.1" fill="none"/></svg>
<span style="top:804.5px;font-size:12px;line-height:16px;color:#000;left:89px;letter-spacing:-0.016px;">DATA_PERMISSIONS</span>
<div style="left:284px;top:804px;width:50px;height:18px;border:1px solid #f1f1f1;box-sizing:border-box;"></div>
<span style="top:804.5px;font-size:12px;line-height:16px;color:#1a1a1a;right:1563px;">405</span>
<svg style="left:57px;top:828.5px;" width="6" height="10" viewBox="0 0 6 10"><path d="M1 1L5 5L1 9" fill="none" stroke="#707070" stroke-width="1.5"/></svg>
<svg style="left:69px;top:827.5px;" width="14" height="11.5" viewBox="0 0 14 11.5"><rect x="0.5" y="0.5" width="13" height="10.5" fill="#fff" stroke="#3a7ebf"/><rect x="0" y="0" width="14" height="3.5" fill="#3a7ebf"/><path d="M0 7.5H14M7 3V11.5" stroke="#3a7ebf" stroke-width="1.1" fill="none"/></svg>
<span style="top:824.5px;font-size:12px;line-height:16px;color:#000;left:89px;letter-spacing:-0.054px;">DATABASECHANGELOG</span>
<div style="left:284px;top:824px;width:50px;height:18px;border:1px solid #f1f1f1;box-sizing:border-box;"></div>
<span style="top:824.5px;font-size:12px;line-height:16px;color:#1a1a1a;right:1563px;">76K</span>
<svg style="left:57px;top:848.5px;" width="6" height="10" viewBox="0 0 6 10"><path d="M1 1L5 5L1 9" fill="none" stroke="#707070" stroke-width="1.5"/></svg>
<svg style="left:69px;top:847.5px;" width="14" height="11.5" viewBox="0 0 14 11.5"><rect x="0.5" y="0.5" width="13" height="10.5" fill="#fff" stroke="#3a7ebf"/><rect x="0" y="0" width="14" height="3.5" fill="#3a7ebf"/><path d="M0 7.5H14M7 3V11.5" stroke="#3a7ebf" stroke-width="1.1" fill="none"/></svg>
<span style="top:844.5px;font-size:12px;line-height:16px;color:#000;left:89px;letter-spacing:-0.053px;">DATABASECHANGELOGLOCK</span>
<div style="left:284px;top:844px;width:50px;height:18px;border:1px solid #f1f1f1;box-sizing:border-box;"></div>
<span style="top:844.5px;font-size:12px;line-height:16px;color:#1a1a1a;right:1563px;">18</span>
<svg style="left:57px;top:868.5px;" width="6" height="10" viewBox="0 0 6 10"><path d="M1 1L5 5L1 9" fill="none" stroke="#707070" stroke-width="1.5"/></svg>
<svg style="left:69px;top:867.5px;" width="14" height="11.5" viewBox="0 0 14 11.5"><rect x="0.5" y="0.5" width="13" height="10.5" fill="#fff" stroke="#3a7ebf"/><rect x="0" y="0" width="14" height="3.5" fill="#3a7ebf"/><path d="M0 7.5H14M7 3V11.5" stroke="#3a7ebf" stroke-width="1.1" fill="none"/></svg>
<span style="top:864.5px;font-size:12px;line-height:16px;color:#000;left:89px;letter-spacing:-0.335px;">DB_ROUTER</span>
<div style="left:50px;top:882px;width:280px;height:9px;overflow:hidden"><svg style="position:absolute;left:7px;top:5px" width="6" height="10" viewBox="0 0 6 10"><path d="M1 1L5 5L1 9" fill="none" stroke="#5a5a5a" stroke-width="1.5"/></svg><div style="position:absolute;left:19px;top:4.5px;width:14px;height:4px;background:#3a7ebf"></div><span style="position:absolute;left:39px;top:2px;font-size:12px;line-height:16px;letter-spacing:-0.1px">DEPENDENCY</span></div>
<div style="left:0px;top:891px;width:352px;height:17px;background:#f3f3f3;"></div>
<div style="left:18px;top:898.5px;width:272px;height:2px;background:#6e6e6e;"></div>
<div style="left:0px;top:908px;width:360px;height:6px;background:#f1f1f1;"></div>
<div style="left:0px;top:914px;width:353px;height:90px;background:#f7f7f7;"></div>
<div style="left:0px;top:914px;width:134px;height:23px;background:#fbfbfb;"></div>
<div style="left:0px;top:937px;width:134px;height:2px;background:#7a7a7a;"></div>
<div style="left:6px;top:920px;width:14px;height:12px;background:#fff;border:1.4px solid #2f7fc1;box-sizing:border-box;"></div>
<div style="left:6px;top:920px;width:14px;height:3px;background:#2f7fc1;"></div>
<span style="top:919.5px;font-size:12px;line-height:16px;color:#000;left:24px;letter-spacing:0.286px;">Files - General</span>
<svg style="left:117px;top:922.5px;" width="9" height="9" viewBox="0 0 9 9"><path d="M0.5 0.5L8.5 8.5M8.5 0.5L0.5 8.5" stroke="#222" stroke-width="1.2" fill="none"/></svg>
<svg style="left:215px;top:918px;" width="15" height="15" viewBox="0 0 15 15"><path d="M14.44 6.59L14.44 8.41L12.62 8.88L12.09 10.15L13.05 11.77L11.77 13.05L10.15 12.09L8.88 12.62L8.41 14.44L6.59 14.44L6.12 12.62L4.85 12.09L3.23 13.05L1.95 11.77L2.91 10.15L2.38 8.88L0.56 8.41L0.56 6.59L2.38 6.12L2.91 4.85L1.95 3.23L3.23 1.95L4.85 2.91L6.12 2.38L6.59 0.56L8.41 0.56L8.88 2.38L10.15 2.91L11.77 1.95L13.05 3.23L12.09 4.85L12.62 6.12Z" fill="none" stroke="#4a90d9" stroke-width="1"/><circle cx="7.5" cy="7.5" r="2.70" fill="none" stroke="#4a90d9" stroke-width="1"/></svg>
<svg style="left:239px;top:922px;" width="15" height="8" viewBox="0 0 15 8"><rect x="0.6" y="3.2" width="11" height="2.6" rx="0.6" fill="none" stroke="#3d8fd1" stroke-width="1"/><path d="M2.5 1.2H13.5V3.5" fill="none" stroke="#3d8fd1" stroke-width="1"/></svg>
<svg style="left:261px;top:918px;" width="15" height="15" viewBox="0 0 15 15"><path d="M5.5 0.6H9.5V5.5H14.4V9.5H9.5V14.4H5.5V9.5H0.6V5.5H5.5Z" fill="none" stroke="#3d8fd1" stroke-width="1.1"/></svg>
<svg style="left:286px;top:919px;" width="14" height="13" viewBox="0 0 14 13"><path d="M5 2.2H8.5V0.5L12.5 3.5L8.5 6.5V4.8H5Z" fill="#dcebfa" stroke="#3d8fd1" stroke-width="1"/><path d="M9 8.2H5.5V6.5L1.5 9.5L5.5 12.5V10.8H9Z" fill="#dcebfa" stroke="#3d8fd1" stroke-width="1"/></svg>
<div style="left:310px;top:920px;width:10.5px;height:4.5px;border:1.4px solid #111;box-sizing:border-box;"></div>
<div style="left:333px;top:920px;width:10.5px;height:10.5px;border:1.4px solid #111;box-sizing:border-box;"></div>
<div style="left:333px;top:921.5px;width:10.5px;height:1px;background:#111;"></div>
<div style="left:0px;top:939px;width:337px;height:65px;background:#fff;"></div>
<div style="left:337px;top:939px;width:15px;height:65px;background:#f3f3f3;"></div>
<span style="top:943px;font-size:12px;line-height:16px;color:#000;left:6px;letter-spacing:0.492px;">名称</span>
<span style="top:943px;font-size:12px;line-height:16px;color:#000;left:216px;letter-spacing:-0.005px;">数据源</span>
<div style="left:209px;top:940px;width:1px;height:22px;background:#e8e8e8;"></div>
<div style="left:324px;top:940px;width:1px;height:22px;background:#e8e8e8;"></div>
<div style="left:344px;top:956px;width:2px;height:17px;background:#6e6e6e;"></div>
<svg style="left:9px;top:968px;" width="6" height="10" viewBox="0 0 6 10"><path d="M1 1L5 5L1 9" fill="none" stroke="#707070" stroke-width="1.5"/></svg>
<svg style="left:21px;top:966px;" width="16" height="15" viewBox="0 0 16 15"><path d="M0.7 2Q0.7 1 1.7 1H5L6.5 3H12.5Q13.3 3 13.3 4V7.5M0.7 2V11.5Q0.7 12.3 1.5 12.3H7.5" fill="none" stroke="#f08a0b" stroke-width="1.3"/><circle cx="11.5" cy="11" r="3.8" fill="#f08a0b"/><path d="M9.5 11H13.5M11.5 9V13" stroke="#fff" stroke-width="1.2"/></svg>
<span style="top:965px;font-size:13px;line-height:16px;color:#000;left:41px;letter-spacing:0.219px;">Bookmarks</span>
<svg style="left:9px;top:988px;" width="6" height="10" viewBox="0 0 6 10"><path d="M1 1L5 5L1 9" fill="none" stroke="#707070" stroke-width="1.5"/></svg>
<svg style="left:21px;top:986px;" width="14" height="12" viewBox="0 0 14 12"><path d="M0 1.5Q0 0.5 1 0.5H5L6.5 2.5H13Q14 2.5 14 3.5V11Q14 12 13 12H1Q0 12 0 11Z" fill="#f08a0b"/><rect x="2.5" y="6" width="3.5" height="4" fill="none" stroke="#fff" stroke-width="1.2"/><rect x="8" y="6" width="3.5" height="4" fill="none" stroke="#fff" stroke-width="1.2"/></svg>
<span style="top:985px;font-size:13px;line-height:16px;color:#000;left:41px;letter-spacing:0.089px;">Dashboards</span>
<div style="left:0px;top:1004px;width:1896px;height:3px;background:#f5f5f5;"></div>
<div style="left:353px;top:110px;width:1543px;height:1px;background:#ececec;"></div>
<div style="left:360px;top:86px;width:92px;height:24px;background:#e9f1fb;"></div>
<div style="left:360px;top:86px;width:92px;height:2px;background:#2f86e0;"></div>
<svg style="left:366px;top:92px;" width="12" height="14" viewBox="0 0 12 14"><path d="M0.5 0.5H8.5L11.5 3.5V13.5H0.5Z" fill="#fff" stroke="#3a7ebf" stroke-width="1"/><path d="M2.5 5H5M6.5 5H9.5M2.5 7.5H5M6.5 7.5H9.5M2.5 10H5M6.5 10H9.5" stroke="#3a7ebf" stroke-width="1.3"/></svg>
<span style="top:92px;font-size:12px;line-height:16px;color:#000;left:384px;letter-spacing:-0.393px;">PUBLIC</span>
<svg style="left:435px;top:95px;" width="9" height="9" viewBox="0 0 9 9"><path d="M0.5 0.5L8.5 8.5M8.5 0.5L0.5 8.5" stroke="#222" stroke-width="1.2" fill="none"/></svg>
<div style="left:361px;top:114px;width:54px;height:28px;background:#7dbbfb;border-radius:4px 0 0 0;"></div>
<svg style="left:367px;top:121px;" width="12" height="14" viewBox="0 0 12 14"><path d="M0.5 0.5H8.5L11.5 3.5V13.5H0.5Z" fill="#9ccbfa" stroke="#4a8fd3" stroke-width="1"/><path d="M2.5 5H5M6.5 5H9.5M2.5 7.5H5M6.5 7.5H9.5M2.5 10H5M6.5 10H9.5" stroke="#4a8fd3" stroke-width="1.3"/></svg>
<span style="top:121px;font-size:12px;line-height:16px;color:#000;left:385px;letter-spacing:-0.508px;">属性</span>
<div style="left:415px;top:113px;width:41px;height:29px;background:#eaf1fb;"></div>
<div style="left:415px;top:113px;width:41px;height:2.5px;background:#2f86e0;border-radius:3px 3px 0 0;"></div>
<div style="left:455px;top:115px;width:1px;height:27px;background:#b5b5b5;"></div>
<svg style="left:419px;top:121px;" width="14" height="13" viewBox="0 0 14 13"><circle cx="7" cy="2.3" r="1.8" fill="none" stroke="#3d8fd1" stroke-width="1"/><path d="M7 4.2V6.5M2.5 9V6.5H11.5V9" fill="none" stroke="#3d8fd1" stroke-width="1"/><rect x="0.5" y="9" width="3.6" height="3.5" fill="none" stroke="#3d8fd1"/><rect x="5.2" y="9" width="3.6" height="3.5" fill="none" stroke="#3d8fd1"/><rect x="9.9" y="9" width="3.6" height="3.5" fill="none" stroke="#3d8fd1"/></svg>
<span style="top:121px;font-size:12px;line-height:16px;color:#000;left:438px;">图</span>
<div style="left:455px;top:141px;width:670px;height:1px;background:#9f9f9f;"></div>
<div style="left:360px;top:142px;width:736px;height:796px;background:#fff;"></div>
<div style="left:356px;top:142px;width:4px;height:796px;background:#f1f1f1;"></div>
<div style="left:1096px;top:142px;width:16px;height:796px;background:#f1f1f1;"></div>
<div style="left:1104px;top:547px;width:2px;height:55px;background:#6e6e6e;"></div>
<div style="left:1112px;top:142px;width:13px;height:813px;background:#fff;"></div>
<div style="left:1112px;top:142px;width:1px;height:813px;background:#9a9a9a;"></div>
<div style="left:1124px;top:142px;width:1px;height:813px;background:#9a9a9a;"></div>
<div style="left:1112px;top:166px;width:13px;height:1px;background:#9a9a9a;"></div>
<svg style="left:1114px;top:148px;" width="8" height="13" viewBox="0 0 8 13"><path d="M7 1L1 6.5L7 12Z" fill="#fff" stroke="#555" stroke-width="1"/></svg>
<div style="left:356px;top:938px;width:756px;height:17px;background:#f1f1f1;"></div>
<div style="left:693px;top:946px;width:131px;height:2px;background:#6e6e6e;"></div>
<div style="left:360px;top:142px;width:736px;height:796px;overflow:hidden"><svg style="position:absolute;left:-360px;top:-142px" width="1896" height="1007" viewBox="0 0 1896 1007"><path d="M579.5 142L624.5 265.5L646 265.5" fill="none" stroke="#4b9fca" stroke-width="1" stroke-dasharray="1.3 0.7"/><path d="M571.5 142L624.5 290L646 290" fill="none" stroke="#4b9fca" stroke-width="1" stroke-dasharray="1.3 0.7"/><path d="M488 194.5L503 194.5" fill="none" stroke="#4b9fca" stroke-width="1"/><path d="M503 194.5L624 385L634 385" fill="none" stroke="#4b9fca" stroke-width="1" stroke-dasharray="1 1"/><path d="M360 287L486 326.5L625 436.5L646 436.5" fill="none" stroke="#4b9fca" stroke-width="1" stroke-dasharray="1.3 0.7"/><path d="M360 292L481 329L625 459.5L646 459.5" fill="none" stroke="#4b9fca" stroke-width="1" stroke-dasharray="1.3 0.7"/><path d="M483 428L499 428" fill="none" stroke="#4b9fca" stroke-width="1"/><path d="M499 428L625 477.5L646 477.5" fill="none" stroke="#4b9fca" stroke-width="1" stroke-dasharray="1.3 0.7"/><path d="M360 512L470 518" fill="none" stroke="#4b9fca" stroke-width="1" stroke-dasharray="1.3 0.7"/><path d="M470 518L634 528.5" fill="none" stroke="#8cc4e4" stroke-width="1"/><path d="M360 526.5L470 521" fill="none" stroke="#4b9fca" stroke-width="1" stroke-dasharray="1.3 0.7"/><path d="M470 521L634 512.3" fill="none" stroke="#8cc4e4" stroke-width="1"/><path d="M360 548L480 543.5" fill="none" stroke="#4b9fca" stroke-width="1" stroke-dasharray="1.3 0.7"/><path d="M480 543.5L646 537.5" fill="none" stroke="#8cc4e4" stroke-width="1"/><path d="M634 575.5L625 575.5L360 767" fill="none" stroke="#4b9fca" stroke-width="1" stroke-dasharray="1.3 0.7"/><path d="M646 595.5L625 595.5L360 787.5" fill="none" stroke="#4b9fca" stroke-width="1" stroke-dasharray="1.3 0.7"/><path d="M646 655.5L625 655.5L438 938" fill="none" stroke="#4b9fca" stroke-width="1" stroke-dasharray="1.3 0.7"/><path d="M634 682L625 682L482 938" fill="none" stroke="#4b9fca" stroke-width="1" stroke-dasharray="1.3 0.7"/><path d="M646 706.5L624 706.5L495 938" fill="none" stroke="#4b9fca" stroke-width="1" stroke-dasharray="1.3 0.7"/><path d="M646 733.5L624 733.5L533 938" fill="none" stroke="#4b9fca" stroke-width="1" stroke-dasharray="1.3 0.7"/><path d="M634 753.3L624 753.3L544.5 938" fill="none" stroke="#4b9fca" stroke-width="1" stroke-dasharray="1.3 0.7"/><path d="M646 767L624 767L560 938" fill="none" stroke="#4b9fca" stroke-width="1" stroke-dasharray="1.3 0.7"/><path d="M644 792.5L624 792.5L570 938" fill="none" stroke="#4b9fca" stroke-width="1" stroke-dasharray="1.3 0.7"/><path d="M673.8 775L673.8 796.7L633.6 938" fill="none" stroke="#4b9fca" stroke-width="1" stroke-dasharray="1.3 0.7"/><path d="M687.4 775L687.4 796.7L655.5 938" fill="none" stroke="#4b9fca" stroke-width="1" stroke-dasharray="1.3 0.7"/><path d="M696.8 775L696.8 796.7L669.4 938" fill="none" stroke="#4b9fca" stroke-width="1" stroke-dasharray="1.3 0.7"/><path d="M703.2 775L703.2 796.7L680.3 938" fill="none" stroke="#4b9fca" stroke-width="1" stroke-dasharray="1.3 0.7"/><path d="M705.3 775L705.3 796.7L683.6 938" fill="none" stroke="#4b9fca" stroke-width="1" stroke-dasharray="1.3 0.7"/><path d="M713.3 775L713.3 796.7L688.2 938" fill="none" stroke="#4b9fca" stroke-width="1" stroke-dasharray="1.3 0.7"/><path d="M723.4 775L723.4 796.7L699.2 938" fill="none" stroke="#4b9fca" stroke-width="1" stroke-dasharray="1.3 0.7"/><path d="M724.9 775L724.9 796.7L702 938" fill="none" stroke="#4b9fca" stroke-width="1" stroke-dasharray="1.3 0.7"/><path d="M716.6 775L716.6 796.7L695.5 938" fill="none" stroke="#7bbbdc" stroke-width="1"/><path d="M725.6 775L725.6 796.7L712.4 938" fill="none" stroke="#7bbbdc" stroke-width="1"/><path d="M633 142L638.6 240" fill="none" stroke="#4b9fca" stroke-width="1" stroke-dasharray="1 1.6"/><path d="M638 142L648 170L656 193L664.6 218.5" fill="none" stroke="#7bbbdc" stroke-width="1"/><path d="M664.6 218.5L664.6 230" fill="none" stroke="#3d97c6" stroke-width="1" stroke-dasharray="1.3 0.7"/><path d="M657.4 142L658.5 230" fill="none" stroke="#3d97c6" stroke-width="1.3" stroke-dasharray="1.2 1.2"/><path d="M674.6 142L678 241" fill="none" stroke="#3d97c6" stroke-width="1.1" stroke-dasharray="1.2 1.1"/><path d="M677.3 142L678.8 241" fill="none" stroke="#3d97c6" stroke-width="1.1" stroke-dasharray="1.2 1.1"/><path d="M682.8 142L685.5 241" fill="none" stroke="#3d97c6" stroke-width="1.1" stroke-dasharray="1.2 1.1"/><path d="M687.7 142L691.8 231" fill="none" stroke="#3d97c6" stroke-width="1.1" stroke-dasharray="1.2 1.1"/><path d="M690 142L692.8 231" fill="none" stroke="#3d97c6" stroke-width="1.1" stroke-dasharray="1.2 1.1"/><path d="M692 142L698.4 231" fill="none" stroke="#3d97c6" stroke-width="1.1" stroke-dasharray="1.2 1.1"/><path d="M695.4 142L699.4 231" fill="none" stroke="#3d97c6" stroke-width="1.1" stroke-dasharray="1.2 1.1"/><path d="M696.5 142L705.8 231" fill="none" stroke="#3d97c6" stroke-width="1.1" stroke-dasharray="1.2 1.1"/><path d="M707.4 142L711.8 231" fill="none" stroke="#3d97c6" stroke-width="1.1" stroke-dasharray="1.2 1.1"/><path d="M709.6 142L712.8 231" fill="none" stroke="#3d97c6" stroke-width="1.1" stroke-dasharray="1.2 1.1"/><path d="M719.4 142L725.4 231" fill="none" stroke="#3d97c6" stroke-width="1.1" stroke-dasharray="1.2 1.1"/><path d="M726.5 142L731.4 241" fill="none" stroke="#3d97c6" stroke-width="1.1" stroke-dasharray="1.2 1.1"/><path d="M728 142L732.5 241" fill="none" stroke="#3d97c6" stroke-width="1.1" stroke-dasharray="1.2 1.1"/><path d="M729.2 142L733.6 241" fill="none" stroke="#3d97c6" stroke-width="1.1" stroke-dasharray="1.2 1.1"/><path d="M735.8 142L738.6 231" fill="none" stroke="#3d97c6" stroke-width="1.1" stroke-dasharray="1.2 1.1"/><path d="M737.4 142L739.4 231" fill="none" stroke="#3d97c6" stroke-width="1.1" stroke-dasharray="1.2 1.1"/><path d="M699.7 142L703 190L706.8 231" fill="none" stroke="#7bbbdc" stroke-width="1"/><path d="M717.7 142L718.8 241" fill="none" stroke="#8cc4e4" stroke-width="1"/><path d="M727.5 142L732.5 241" fill="none" stroke="#7bbbdc" stroke-width="1.2"/><path d="M855 508.6L910 508.6" fill="none" stroke="#4b9fca" stroke-width="1"/><path d="M653.5 235.6L658.5 230.6L663.5 235.6L658.5 240.6Z" fill="#fff" stroke="#4b9fca" stroke-width="1"/><path d="M659.6 235.6L664.6 230.6L669.6 235.6L664.6 240.6Z" fill="#fff" stroke="#4b9fca" stroke-width="1"/><path d="M687.3 235.6L692.3 230.6L697.3 235.6L692.3 240.6Z" fill="#fff" stroke="#4b9fca" stroke-width="1"/><path d="M693.9 235.6L698.9 230.6L703.9 235.6L698.9 240.6Z" fill="#fff" stroke="#4b9fca" stroke-width="1"/><path d="M701.3 235.6L706.3 230.6L711.3 235.6L706.3 240.6Z" fill="#fff" stroke="#4b9fca" stroke-width="1"/><path d="M707.3 235.6L712.3 230.6L717.3 235.6L712.3 240.6Z" fill="#fff" stroke="#4b9fca" stroke-width="1"/><path d="M720.4 235.6L725.4 230.6L730.4 235.6L725.4 240.6Z" fill="#fff" stroke="#4b9fca" stroke-width="1"/><path d="M734 235.6L739 230.6L744 235.6L739 240.6Z" fill="#fff" stroke="#4b9fca" stroke-width="1"/><path d="M634.5 385L639.5 380L644.5 385L639.5 390Z" fill="#fff" stroke="#4b9fca" stroke-width="1"/><path d="M634.5 512.4L639.5 507.4L644.5 512.4L639.5 517.4Z" fill="#fff" stroke="#4b9fca" stroke-width="1"/><path d="M634.5 528.4L639.5 523.4L644.5 528.4L639.5 533.4Z" fill="#fff" stroke="#4b9fca" stroke-width="1"/><path d="M634.5 575.5L639.5 570.5L644.5 575.5L639.5 580.5Z" fill="#fff" stroke="#4b9fca" stroke-width="1"/><path d="M634.5 682L639.5 677L644.5 682L639.5 687Z" fill="#fff" stroke="#4b9fca" stroke-width="1"/><path d="M634.5 753.3L639.5 748.3L644.5 753.3L639.5 758.3Z" fill="#fff" stroke="#4b9fca" stroke-width="1"/><path d="M910 508.6L915 503.6L920 508.6L915 513.6Z" fill="#fff" stroke="#4b9fca" stroke-width="1"/><circle cx="488" cy="194.7" r="4.3" fill="#5f6871" stroke="#3d7aa8" stroke-width="0.8"/><circle cx="483" cy="428" r="4.3" fill="#5f6871" stroke="#3d7aa8" stroke-width="0.8"/><circle cx="855" cy="508.6" r="4.3" fill="#5f6871" stroke="#3d7aa8" stroke-width="0.8"/></svg></div>
<div style="left:360px;top:142px;width:123px;height:122px;background:#fff;"></div>
<div style="left:480.5px;top:142px;width:2.5px;height:122px;background:#1f86b8;"></div>
<div style="left:360px;top:261.5px;width:123px;height:2.5px;background:#1f86b8;"></div>
<div style="left:360px;top:142.5px;width:38px;height:16px;overflow:hidden"><span style="position:absolute;right:2px;top:0;font-size:11px;line-height:16px;letter-spacing:-0.05px">CREATED_AT</span></div>
<div style="left:360px;top:182.5px;width:28px;height:16px;overflow:hidden"><span style="position:absolute;right:2px;top:0;font-size:11px;line-height:16px;letter-spacing:-0.05px">IS_SAMPLE</span></div>
<div style="left:360px;top:202.5px;width:103px;height:16px;overflow:hidden"><span style="position:absolute;right:2px;top:0;font-size:11px;line-height:16px;letter-spacing:-0.05px">ARCHIVE_OPERATION_ID</span></div>
<div style="left:360px;top:222.5px;width:82px;height:16px;overflow:hidden"><span style="position:absolute;right:2px;top:0;font-size:11px;line-height:16px;letter-spacing:-0.05px">ARCHIVED_DIRECTLY</span></div>
<div style="left:360px;top:242.5px;width:78px;height:16px;overflow:hidden"><span style="position:absolute;right:2px;top:0;font-size:11px;line-height:16px;letter-spacing:-0.05px">IS_REMOTE_SYNCED</span></div>
<div style="left:360px;top:334px;width:118px;height:133px;background:#fff;"></div>
<div style="left:360px;top:334.5px;width:118px;height:2px;background:#1f86b8;"></div>
<div style="left:475.5px;top:334px;width:2.5px;height:133px;background:#1f86b8;"></div>
<div style="left:360px;top:465px;width:118px;height:2.5px;background:#1f86b8;"></div>
<div style="left:360px;top:336.5px;width:115px;height:21.5px;background:#fffbe0;"></div>
<div style="left:360px;top:358px;width:115px;height:1.2px;background:#1f86b8;"></div>
<div style="left:360px;top:382px;width:115px;height:1.2px;background:#1f86b8;"></div>
<div style="left:360px;top:339px;width:115px;height:16px;overflow:hidden"><span style="position:absolute;right:2px;top:0;font-size:11px;line-height:16px;letter-spacing:-0.05px">METABOT_CONVERSATION</span></div>
<div style="left:360px;top:386.5px;width:38px;height:16px;overflow:hidden"><span style="position:absolute;right:2px;top:0;font-size:11px;line-height:16px;letter-spacing:-0.05px">CREATED_AT</span></div>
<div style="left:360px;top:406.5px;width:13px;height:16px;overflow:hidden"><span style="position:absolute;right:2px;top:0;font-size:11px;line-height:16px;letter-spacing:-0.05px">USER_ID</span></div>
<div style="left:360px;top:426.5px;width:30px;height:16px;overflow:hidden"><span style="position:absolute;right:2px;top:0;font-size:11px;line-height:16px;letter-spacing:-0.05px">SUMMARY</span></div>
<div style="left:645px;top:241px;width:205px;height:534px;background:#fff;border:2.5px solid #1f86b8;box-sizing:border-box;"></div>
<div style="left:647.5px;top:243.5px;width:200px;height:21.5px;background:#ffe04f;"></div>
<div style="left:647.5px;top:265px;width:200px;height:1.5px;background:#1f86b8;"></div>
<div style="left:647.5px;top:289px;width:200px;height:1.5px;background:#1f86b8;"></div>
<svg style="left:707px;top:248px;" width="14" height="11" viewBox="0 0 14 11"><rect x="0.5" y="0.5" width="13" height="10" fill="#ffe04f" stroke="#4f7fa8"/><rect x="0" y="0" width="14" height="3.5" fill="#4f7fa8"/><path d="M0 7.25H14M7 3V11" stroke="#4f7fa8" stroke-width="1.1" fill="none"/></svg>
<span style="top:246px;font-size:11px;line-height:16px;color:#000;left:725px;letter-spacing:-0.719px;">CORE_USER</span>
<span style="top:270.5px;font-size:10px;line-height:16px;color:#3f86c0;left:649px;letter-spacing:-0.562px;font-stretch:condensed;">123</span>
<span style="top:269.5px;font-size:11.5px;line-height:16px;color:#000;left:669px;font-weight:bold;letter-spacing:0.750px;">ID</span>
<span style="top:294px;font-size:11px;line-height:16px;color:#3f86c0;left:650.5px;letter-spacing:-0.911px;">A·Z</span>
<span style="top:293.5px;font-size:11px;line-height:16px;color:#000;left:669px;">EMAIL</span>
<span style="top:314px;font-size:11px;line-height:16px;color:#3f86c0;left:650.5px;letter-spacing:-0.911px;">A·Z</span>
<span style="top:313.5px;font-size:11px;line-height:16px;color:#000;left:669px;letter-spacing:-0.239px;">FIRST_NAME</span>
<span style="top:334px;font-size:11px;line-height:16px;color:#3f86c0;left:650.5px;letter-spacing:-0.911px;">A·Z</span>
<span style="top:333.5px;font-size:11px;line-height:16px;color:#000;left:669px;letter-spacing:-0.014px;">LAST_NAME</span>
<span style="top:354px;font-size:11px;line-height:16px;color:#3f86c0;left:650.5px;letter-spacing:-0.911px;">A·Z</span>
<span style="top:353.5px;font-size:11px;line-height:16px;color:#000;left:669px;letter-spacing:-0.395px;">PASSWORD</span>
<span style="top:374px;font-size:11px;line-height:16px;color:#3f86c0;left:650.5px;letter-spacing:-0.911px;">A·Z</span>
<span style="top:373.5px;font-size:11px;line-height:16px;color:#000;left:669px;letter-spacing:-0.382px;">PASSWORD_SALT</span>
<svg style="left:650.5px;top:394.5px;" width="14" height="14" viewBox="0 0 14 14"><circle cx="7" cy="7" r="6.3" fill="#fff" stroke="#3f86c0" stroke-width="1"/><path d="M7.8 3.2L7 7.3L3.6 10.6" fill="none" stroke="#3f86c0" stroke-width="1"/></svg>
<span style="top:393.5px;font-size:11px;line-height:16px;color:#000;left:669px;letter-spacing:-0.371px;">DATE_JOINED</span>
<svg style="left:650.5px;top:414.5px;" width="14" height="14" viewBox="0 0 14 14"><circle cx="7" cy="7" r="6.3" fill="#fff" stroke="#3f86c0" stroke-width="1"/><path d="M7.8 3.2L7 7.3L3.6 10.6" fill="none" stroke="#3f86c0" stroke-width="1"/></svg>
<span style="top:413.5px;font-size:11px;line-height:16px;color:#000;left:669px;letter-spacing:-0.166px;">LAST_LOGIN</span>
<svg style="left:650.5px;top:434.5px;" width="14" height="14" viewBox="0 0 14 14"><rect x="0.5" y="0.5" width="13" height="13" fill="#fff" stroke="#3f86c0" stroke-width="1"/><path d="M3 7.5L5.8 10.2L11 3.8" fill="none" stroke="#3f86c0" stroke-width="1.1"/></svg>
<span style="top:433.5px;font-size:11px;line-height:16px;color:#000;left:669px;letter-spacing:-0.865px;">IS_SUPERUSER</span>
<svg style="left:650.5px;top:454.5px;" width="14" height="14" viewBox="0 0 14 14"><rect x="0.5" y="0.5" width="13" height="13" fill="#fff" stroke="#3f86c0" stroke-width="1"/><path d="M3 7.5L5.8 10.2L11 3.8" fill="none" stroke="#3f86c0" stroke-width="1.1"/></svg>
<span style="top:453.5px;font-size:11px;line-height:16px;color:#000;left:669px;letter-spacing:-0.339px;">IS_ACTIVE</span>
<span style="top:474px;font-size:11px;line-height:16px;color:#3f86c0;left:650.5px;letter-spacing:-0.911px;">A·Z</span>
<span style="top:473.5px;font-size:11px;line-height:16px;color:#000;left:669px;letter-spacing:-0.582px;">RESET_TOKEN</span>
<span style="top:494.5px;font-size:10px;line-height:16px;color:#3f86c0;left:649px;letter-spacing:-0.562px;font-stretch:condensed;">123</span>
<span style="top:493.5px;font-size:11px;line-height:16px;color:#000;left:669px;letter-spacing:-0.773px;">RESET_TRIGGERED</span>
<svg style="left:650.5px;top:514.5px;" width="14" height="14" viewBox="0 0 14 14"><rect x="0.5" y="0.5" width="13" height="13" fill="#fff" stroke="#3f86c0" stroke-width="1"/><path d="M3 7.5L5.8 10.2L11 3.8" fill="none" stroke="#3f86c0" stroke-width="1.1"/></svg>
<span style="top:513.5px;font-size:11px;line-height:16px;color:#000;left:669px;letter-spacing:-0.278px;">IS_QBNEWB</span>
<svg style="left:651.5px;top:534.5px;" width="12" height="14" viewBox="0 0 12 14"><path d="M0.5 1V0.5H11.5V1M6 0.5V13.5M4 13.5H8" fill="none" stroke="#3f86c0" stroke-width="1"/></svg>
<span style="top:533.5px;font-size:11px;line-height:16px;color:#000;left:669px;letter-spacing:-0.199px;">LOGIN_ATTRIBUTES</span>
<svg style="left:650.5px;top:554.5px;" width="14" height="14" viewBox="0 0 14 14"><circle cx="7" cy="7" r="6.3" fill="#fff" stroke="#3f86c0" stroke-width="1"/><path d="M7.8 3.2L7 7.3L3.6 10.6" fill="none" stroke="#3f86c0" stroke-width="1"/></svg>
<span style="top:553.5px;font-size:11px;line-height:16px;color:#000;left:669px;letter-spacing:-0.161px;">UPDATED_AT</span>
<span style="top:574px;font-size:11px;line-height:16px;color:#3f86c0;left:650.5px;letter-spacing:-0.911px;">A·Z</span>
<span style="top:573.5px;font-size:11px;line-height:16px;color:#000;left:669px;letter-spacing:-0.692px;">SSO_SOURCE</span>
<span style="top:594px;font-size:11px;line-height:16px;color:#3f86c0;left:650.5px;letter-spacing:-0.911px;">A·Z</span>
<span style="top:593.5px;font-size:11px;line-height:16px;color:#000;left:669px;letter-spacing:-0.070px;">LOCALE</span>
<svg style="left:650.5px;top:614.5px;" width="14" height="14" viewBox="0 0 14 14"><rect x="0.5" y="0.5" width="13" height="13" fill="#fff" stroke="#3f86c0" stroke-width="1"/><path d="M3 7.5L5.8 10.2L11 3.8" fill="none" stroke="#3f86c0" stroke-width="1.1"/></svg>
<span style="top:613.5px;font-size:11px;line-height:16px;color:#000;left:669px;letter-spacing:-0.286px;">IS_DATASETNEWB</span>
<svg style="left:651.5px;top:634.5px;" width="12" height="14" viewBox="0 0 12 14"><path d="M0.5 1V0.5H11.5V1M6 0.5V13.5M4 13.5H8" fill="none" stroke="#3f86c0" stroke-width="1"/></svg>
<span style="top:633.5px;font-size:11px;line-height:16px;color:#000;left:669px;letter-spacing:-0.377px;">SETTINGS</span>
<span style="top:654px;font-size:11px;line-height:16px;color:#3f86c0;left:650.5px;letter-spacing:-0.911px;">A·Z</span>
<span style="top:653.5px;font-size:11px;line-height:16px;color:#000;left:669px;letter-spacing:-0.534px;">TYPE</span>
<span style="top:674px;font-size:11px;line-height:16px;color:#3f86c0;left:650.5px;letter-spacing:-0.911px;">A·Z</span>
<span style="top:673.5px;font-size:11px;line-height:16px;color:#000;left:669px;letter-spacing:-0.170px;">ENTITY_ID</span>
<svg style="left:650.5px;top:694.5px;" width="14" height="14" viewBox="0 0 14 14"><circle cx="7" cy="7" r="6.3" fill="#fff" stroke="#3f86c0" stroke-width="1"/><path d="M7.8 3.2L7 7.3L3.6 10.6" fill="none" stroke="#3f86c0" stroke-width="1"/></svg>
<span style="top:693.5px;font-size:11px;line-height:16px;color:#000;left:669px;letter-spacing:-0.161px;">DEACTIVATED_AT</span>
<span style="top:714.5px;font-size:10px;line-height:16px;color:#3f86c0;left:649px;letter-spacing:-0.562px;font-stretch:condensed;">123</span>
<span style="top:713.5px;font-size:11px;line-height:16px;color:#000;left:669px;letter-spacing:0.019px;">TENANT_ID</span>
<svg style="left:651.5px;top:734.5px;" width="12" height="14" viewBox="0 0 12 14"><path d="M0.5 1V0.5H11.5V1M6 0.5V13.5M4 13.5H8" fill="none" stroke="#3f86c0" stroke-width="1"/></svg>
<span style="top:733.5px;font-size:11px;line-height:16px;color:#000;left:669px;letter-spacing:-0.311px;">JWT_ATTRIBUTES</span>
<svg style="left:650.5px;top:754.5px;" width="14" height="14" viewBox="0 0 14 14"><rect x="0.5" y="0.5" width="13" height="13" fill="#fff" stroke="#3f86c0" stroke-width="1"/><path d="M3 7.5L5.8 10.2L11 3.8" fill="none" stroke="#3f86c0" stroke-width="1.1"/></svg>
<span style="top:753.5px;font-size:11px;line-height:16px;color:#000;left:669px;letter-spacing:-0.010px;">DEACTIVATED_WITH_TENANT</span>
<div style="left:920px;top:410.5px;width:176px;height:196px;overflow:hidden"><div style="position:absolute;left:0;top:0;width:230px;height:195px;box-sizing:border-box;border:2.5px solid #1f86b8;background:#fff"></div><div style="position:absolute;left:2.5px;top:2.5px;width:230px;height:22px;background:#fffde2"></div><div style="position:absolute;left:2.5px;top:24.5px;width:230px;height:1.5px;background:#1f86b8"></div><div style="position:absolute;left:2.5px;top:48.5px;width:230px;height:1.5px;background:#1f86b8"></div></div>
<svg style="left:980px;top:418px;" width="14" height="11" viewBox="0 0 14 11"><rect x="0.5" y="0.5" width="13" height="10" fill="#fff" stroke="#4f7fa8"/><rect x="0" y="0" width="14" height="3.5" fill="#4f7fa8"/><path d="M0 7.25H14M7 3V11" stroke="#4f7fa8" stroke-width="1.1" fill="none"/></svg>
<span style="top:415.5px;font-size:11px;line-height:16px;color:#000;left:999px;">TENANT</span>
<span style="top:440.5px;font-size:10px;line-height:16px;color:#3f86c0;left:923px;letter-spacing:-0.562px;font-stretch:condensed;">123</span>
<span style="top:439.5px;font-size:11.5px;line-height:16px;color:#000;left:944px;font-weight:bold;letter-spacing:0.750px;">ID</span>
<span style="top:464px;font-size:11px;line-height:16px;color:#3f86c0;left:925.5px;letter-spacing:-0.911px;">A·Z</span>
<span style="top:463.5px;font-size:11px;line-height:16px;color:#000;left:944px;letter-spacing:0.380px;">NAME</span>
<span style="top:484px;font-size:11px;line-height:16px;color:#3f86c0;left:925.5px;letter-spacing:-0.911px;">A·Z</span>
<span style="top:483.5px;font-size:11px;line-height:16px;color:#000;left:944px;letter-spacing:-0.642px;">SLUG</span>
<svg style="left:925.5px;top:504.5px;" width="14" height="14" viewBox="0 0 14 14"><rect x="0.5" y="0.5" width="13" height="13" fill="#fff" stroke="#3f86c0" stroke-width="1"/><path d="M3 7.5L5.8 10.2L11 3.8" fill="none" stroke="#3f86c0" stroke-width="1.1"/></svg>
<span style="top:503.5px;font-size:11px;line-height:16px;color:#000;left:944px;letter-spacing:-0.383px;">IS_ACTIVE</span>
<svg style="left:925.5px;top:524.5px;" width="14" height="14" viewBox="0 0 14 14"><circle cx="7" cy="7" r="6.3" fill="#fff" stroke="#3f86c0" stroke-width="1"/><path d="M7.8 3.2L7 7.3L3.6 10.6" fill="none" stroke="#3f86c0" stroke-width="1"/></svg>
<span style="top:523.5px;font-size:11px;line-height:16px;color:#000;left:944px;letter-spacing:-0.181px;">UPDATED_AT</span>
<svg style="left:925.5px;top:544.5px;" width="14" height="14" viewBox="0 0 14 14"><circle cx="7" cy="7" r="6.3" fill="#fff" stroke="#3f86c0" stroke-width="1"/><path d="M7.8 3.2L7 7.3L3.6 10.6" fill="none" stroke="#3f86c0" stroke-width="1"/></svg>
<span style="top:543.5px;font-size:11px;line-height:16px;color:#000;left:944px;letter-spacing:-0.421px;">CREATED_AT</span>
<svg style="left:926.5px;top:564.5px;" width="12" height="14" viewBox="0 0 12 14"><path d="M0.5 1V0.5H11.5V1M6 0.5V13.5M4 13.5H8" fill="none" stroke="#3f86c0" stroke-width="1"/></svg>
<span style="top:563.5px;font-size:11px;line-height:16px;color:#000;left:944px;letter-spacing:-0.284px;">ATTRIBUTES</span>
<span style="top:584.5px;font-size:10px;line-height:16px;color:#3f86c0;left:924px;letter-spacing:-0.562px;font-stretch:condensed;">123</span>
<span style="top:583.5px;font-size:11px;line-height:16px;color:#000;left:944px;letter-spacing:0.013px;">TENANT_COLLECTION_ID</span>
<div style="left:360px;top:955px;width:765px;height:49px;background:#7dbbfb;"></div>
<div style="left:360px;top:978px;width:765px;height:1px;background:#8eb0d6;"></div>
<svg style="left:364px;top:984.3px;" width="15" height="14" viewBox="0 0 15 14"><path d="M1 6.2Q1.5 2.2 6 2.2H9.5M7.5 0.2L9.8 2.2L7.5 4.4" fill="none" stroke="#5a93cf" stroke-width="1.1"/><path d="M14 7.8Q13.5 11.8 9 11.8H5.5M7.5 9.6L5.2 11.8L7.5 13.8" fill="none" stroke="#5a93cf" stroke-width="1.1"/><path d="M10.5 4.5L13.5 7.8M3.5 9.5L1 6.2" fill="none" stroke="#5a93cf" stroke-width="1.1"/></svg>
<span style="top:983.8px;font-size:12px;line-height:16px;color:#000;left:383px;letter-spacing:0.492px;">刷新</span>
<svg style="left:417px;top:982.3px;" width="2" height="18" viewBox="0 0 2 18"><rect x="0" y="0" width="1.6" height="1.6" fill="#dfe3dc"/><rect x="0" y="3" width="1.6" height="1.6" fill="#dfe3dc"/><rect x="0" y="6" width="1.6" height="1.6" fill="#dfe3dc"/><rect x="0" y="9" width="1.6" height="1.6" fill="#dfe3dc"/><rect x="0" y="12" width="1.6" height="1.6" fill="#dfe3dc"/><rect x="0" y="15" width="1.6" height="1.6" fill="#dfe3dc"/></svg>
<svg style="left:424px;top:984.3px;" width="14" height="14" viewBox="0 0 14 14"><path d="M0.6 0.6H10.5L13.4 3.5V13.4H0.6Z" fill="none" stroke="#9bb2ca" stroke-width="1.1"/><rect x="3" y="0.6" width="6.5" height="4" fill="none" stroke="#9bb2ca"/><rect x="3" y="8" width="8" height="5.4" fill="none" stroke="#9bb2ca"/></svg>
<span style="top:983.8px;font-size:12px;line-height:16px;color:#90a8c1;left:444px;text-shadow:0 0 0.8px #90a8c1;">保存...</span>
<svg style="left:490px;top:983.3px;" width="14" height="16" viewBox="0 0 14 16"><path d="M0.6 0.6H7.5L11.4 4.5V13.4H0.6Z" fill="#f4f7fb" stroke="#8a99aa" stroke-width="1"/><path d="M2.5 5.5H8.5M2.5 8H8.5M2.5 10.5H6.5" stroke="#8a99aa" stroke-width="1"/><path d="M9 11L11.5 14.5L14 11Z" fill="#8a99aa"/></svg>
<span style="top:983.8px;font-size:12px;line-height:16px;color:#90a8c1;left:507px;letter-spacing:0.992px;text-shadow:0 0 0.8px #90a8c1;">撤销</span>
<svg style="left:543px;top:982.3px;" width="2" height="18" viewBox="0 0 2 18"><rect x="0" y="0" width="1.6" height="1.6" fill="#dfe3dc"/><rect x="0" y="3" width="1.6" height="1.6" fill="#dfe3dc"/><rect x="0" y="6" width="1.6" height="1.6" fill="#dfe3dc"/><rect x="0" y="9" width="1.6" height="1.6" fill="#dfe3dc"/><rect x="0" y="12" width="1.6" height="1.6" fill="#dfe3dc"/><rect x="0" y="15" width="1.6" height="1.6" fill="#dfe3dc"/></svg>
<div style="left:548px;top:981.3px;width:1px;height:20px;background:#5f7288;"></div>
<svg style="left:558px;top:984.3px;" width="15" height="14" viewBox="0 0 15 14"><path d="M0.6 3.5V0.6H3.5M11.5 0.6H14.4V3.5M14.4 10.5V13.4H11.5M3.5 13.4H0.6V10.5" fill="none" stroke="#3ca24a" stroke-width="1.2"/><path d="M3.5 3.5H6M9 3.5H11.5V10.5H3.5V3.5" fill="none" stroke="#3ca24a" stroke-width="1.1"/></svg>
<span style="top:983.8px;font-size:12px;line-height:16px;color:#000;left:578px;letter-spacing:0.496px;">保持布局</span>
<div style="left:636px;top:981.3px;width:1px;height:20px;background:#5f7288;"></div>
<div style="left:642px;top:980.3px;width:63px;height:23px;background:#fff;border:1px solid #7aa7d8;box-sizing:border-box;"></div>
<div style="left:644px;top:982.3px;width:43px;height:19px;background:#7dbbfb;"></div>
<span style="top:984.3px;font-size:12px;line-height:16px;color:#000;left:646px;letter-spacing:0.324px;">100%</span>
<svg style="left:691px;top:989.3px;" width="10" height="6" viewBox="0 0 10 6"><path d="M0.5 0.5L5 5L9.5 0.5" fill="none" stroke="#333" stroke-width="1"/></svg>
<svg style="left:712px;top:984.3px;" width="14" height="14" viewBox="0 0 14 14"><circle cx="5.5" cy="5.5" r="4.6" fill="none" stroke="#4a86c8" stroke-width="1.1"/><path d="M9 9L13 13" stroke="#4a86c8" stroke-width="1.3"/><path d="M3.2 5.5H7.8" stroke="#4a86c8" stroke-width="1.1"/><path d="M5.5 3.2V7.8" stroke="#4a86c8" stroke-width="1.1"/></svg>
<svg style="left:736px;top:984.3px;" width="14" height="14" viewBox="0 0 14 14"><circle cx="5.5" cy="5.5" r="4.6" fill="none" stroke="#4a86c8" stroke-width="1.1"/><path d="M9 9L13 13" stroke="#4a86c8" stroke-width="1.3"/><path d="M3.2 5.5H7.8" stroke="#4a86c8" stroke-width="1.1"/></svg>
<div style="left:756px;top:981.3px;width:1px;height:20px;background:#5f7288;"></div>
<svg style="left:768px;top:985.3px;" width="14" height="13" viewBox="0 0 14 13"><rect x="0.5" y="4.5" width="4" height="4" fill="#fff" stroke="#4a90d9"/><rect x="9" y="0.5" width="4.5" height="4.5" fill="#fff" stroke="#4a90d9"/><rect x="9" y="8" width="4.5" height="4.5" fill="#fff" stroke="#4a90d9"/><path d="M4.5 6.5L9 3M4.5 6.5L9 10" stroke="#4a90d9" stroke-width="1"/></svg>
<svg style="left:791px;top:984.3px;" width="15" height="15" viewBox="0 0 15 15"><path d="M0 3.5H15M0 7.5H15M0 11.5H15M3.5 0V15M7.5 0V15M11.5 0V15" stroke="#3f7fc0" stroke-width="1" fill="none"/><rect x="1.5" y="1.5" width="12" height="12" fill="none" stroke="#3f7fc0" stroke-width="1"/></svg>
<svg style="left:815px;top:985.3px;" width="13" height="13" viewBox="0 0 13 13"><path d="M6.5 0.5V12.5M0.5 6.5H12.5M4.5 2.5L6.5 0.5L8.5 2.5M4.5 10.5L6.5 12.5L8.5 10.5M2.5 4.5L0.5 6.5L2.5 8.5M10.5 4.5L12.5 6.5L10.5 8.5" fill="none" stroke="#3f86d0" stroke-width="1.1"/></svg>
<div style="left:836px;top:981.3px;width:1px;height:20px;background:#5f7288;"></div>
<svg style="left:847px;top:985.3px;" width="15" height="14" viewBox="0 0 15 14"><rect x="0.6" y="0.6" width="12" height="10" fill="#dcebfb" stroke="#4a86c4" stroke-width="1.1"/><path d="M2.5 3.5H10.5M2.5 6H10.5M2.5 8.3H7" stroke="#4a86c4" stroke-width="1"/><circle cx="11.5" cy="10.5" r="3.2" fill="#3f86d0"/><path d="M11.5 8.8V10.8M11.5 11.8V12.4" stroke="#fff" stroke-width="1"/></svg>
<svg style="left:870px;top:984.3px;" width="15" height="14" viewBox="0 0 15 14"><rect x="0.5" y="0.5" width="3.5" height="3.5" fill="none" stroke="#5a93cf"/><rect x="0.5" y="9.5" width="3.5" height="3.5" fill="none" stroke="#5a93cf"/><rect x="5" y="5" width="3.5" height="3.5" fill="none" stroke="#5a93cf"/><path d="M7 2.3H14M11 6.8H14M7 11.3H14" stroke="#5a93cf" stroke-width="1.3"/></svg>
<div style="left:892px;top:981.3px;width:1px;height:20px;background:#5f7288;"></div>
<svg style="left:903px;top:985.3px;" width="15" height="13" viewBox="0 0 15 13"><rect x="3.5" y="0.6" width="8" height="4" fill="#dcebfb" stroke="#3f7fc0" stroke-width="1.1"/><rect x="0.6" y="4.6" width="13.8" height="5.5" rx="1" fill="#3f86d0"/><rect x="3.5" y="8.3" width="8" height="4" fill="#fff" stroke="#3f7fc0" stroke-width="1.1"/></svg>
<svg style="left:926px;top:983.3px;" width="16" height="16" viewBox="0 0 16 16"><path d="M0.6 0.6H10L12.4 3V12.4H0.6Z" fill="#e8f6e4" stroke="#3ca24a" stroke-width="1.2"/><rect x="3" y="0.6" width="6" height="3.6" fill="#3ca24a"/><circle cx="11" cy="11.3" r="4.3" fill="#3ca24a"/><path d="M8.2 13L10.2 10.3L11.6 12L12.6 11L13.9 13Z" fill="#fff"/></svg>
<div style="left:948px;top:981.3px;width:1px;height:20px;background:#5f7288;"></div>
<svg style="left:959px;top:984.3px;" width="15" height="15" viewBox="0 0 15 15"><path d="M14.44 6.59L14.44 8.41L12.62 8.88L12.09 10.15L13.05 11.77L11.77 13.05L10.15 12.09L8.88 12.62L8.41 14.44L6.59 14.44L6.12 12.62L4.85 12.09L3.23 13.05L1.95 11.77L2.91 10.15L2.38 8.88L0.56 8.41L0.56 6.59L2.38 6.12L2.91 4.85L1.95 3.23L3.23 1.95L4.85 2.91L6.12 2.38L6.59 0.56L8.41 0.56L8.88 2.38L10.15 2.91L11.77 1.95L13.05 3.23L12.09 4.85L12.62 6.12Z" fill="none" stroke="#4a86c8" stroke-width="1"/><circle cx="7.5" cy="7.5" r="2.70" fill="none" stroke="#4a86c8" stroke-width="1"/></svg>
<span style="top:984.3px;font-size:12px;line-height:16px;color:#000;left:983px;letter-spacing:-0.005px;text-shadow:0 0 1px #fff,0 0 1px #fff;">实体图</span>
<div style="left:1024px;top:980.3px;width:27px;height:23px;background:#7dbbfb;border:1.5px solid #f4f6f8;box-sizing:border-box;"></div>
<div style="left:1026px;top:983.3px;width:23px;height:18px;overflow:hidden"><span style="position:absolute;left:1px;top:2px;font-size:13px;line-height:16px">cor</span><i style="position:absolute;left:20px;top:8px;width:1px;height:3px;background:#222"></i></div>
<svg style="left:1060px;top:988.3px;" width="12" height="7" viewBox="0 0 12 7"><path d="M0.5 6.5L6 1L11.5 6.5" fill="none" stroke="#a9c4e4" stroke-width="1.1"/></svg>
<svg style="left:1084px;top:988.3px;" width="12" height="7" viewBox="0 0 12 7"><path d="M0.5 0.5L6 6L11.5 0.5" fill="none" stroke="#a9c4e4" stroke-width="1.1"/></svg>
<svg style="left:1107px;top:985.3px;" width="13" height="13" viewBox="0 0 13 13"><path d="M1.5 1.5L11.5 11.5M11.5 1.5L1.5 11.5" stroke="#4d5157" stroke-width="3" stroke-linecap="round"/></svg>
<div style="left:1125px;top:86px;width:6px;height:918px;background:#f6f6f6;"></div>
<div style="left:1131px;top:86px;width:118px;height:24px;background:#e9f1fb;"></div>
<div style="left:1131px;top:86px;width:118px;height:2px;background:#2f86e0;"></div>
<svg style="left:1136px;top:93px;" width="15" height="12" viewBox="0 0 15 12"><rect x="0.5" y="0.5" width="14" height="11" fill="#fff" stroke="#3a7ebf"/><rect x="0" y="0" width="15" height="3.5" fill="#3a7ebf"/><path d="M0 7.75H15M7.5 3V12" stroke="#3a7ebf" stroke-width="1.1" fill="none"/></svg>
<span style="top:92px;font-size:12px;line-height:16px;color:#000;left:1154px;letter-spacing:-0.632px;">CORE_USER</span>
<svg style="left:1232px;top:95px;" width="9" height="9" viewBox="0 0 9 9"><path d="M0.5 0.5L8.5 8.5M8.5 0.5L0.5 8.5" stroke="#222" stroke-width="1.2" fill="none"/></svg>
<div style="left:1132px;top:114px;width:147px;height:28px;background:#7dbbfb;border-radius:4px 4px 0 0;"></div>
<div style="left:1185px;top:113px;width:53px;height:29px;background:#eaf1fb;"></div>
<div style="left:1185px;top:113px;width:53px;height:2.5px;background:#2f86e0;border-radius:3px 3px 0 0;"></div>
<svg style="left:1137px;top:123px;" width="14" height="11" viewBox="0 0 14 11"><rect x="0.5" y="0.5" width="13" height="10" fill="#a9d1fb" stroke="#4a8fd3"/><rect x="0" y="0" width="14" height="3.5" fill="#4a8fd3"/><path d="M0 7.25H14M7 3V11" stroke="#4a8fd3" stroke-width="1.1" fill="none"/></svg>
<span style="top:121px;font-size:12px;line-height:16px;color:#000;left:1155px;letter-spacing:-0.008px;">属性</span>
<svg style="left:1190px;top:122px;" width="16" height="14" viewBox="0 0 16 14"><rect x="0.5" y="0.5" width="13" height="10.5" fill="#fff" stroke="#3a7ebf"/><rect x="0" y="0" width="14" height="3" fill="#3a7ebf"/><path d="M0 7H14M4.7 3V11M9.3 3V11" stroke="#3a7ebf" stroke-width="1"/><circle cx="11.5" cy="9.8" r="4" fill="#3a86d6"/><path d="M10.6 8L9 9.8L10.6 11.6M12.4 8L14 9.8L12.4 11.6" fill="none" stroke="#fff" stroke-width="0.9"/></svg>
<span style="top:121px;font-size:12px;line-height:16px;color:#000;left:1208px;letter-spacing:0.492px;">数据</span>
<svg style="left:1242px;top:121px;" width="14" height="13" viewBox="0 0 14 13"><circle cx="7" cy="2.3" r="1.8" fill="none" stroke="#4a8fd3" stroke-width="1"/><path d="M7 4.2V6.5M2.5 9V6.5H11.5V9" fill="none" stroke="#4a8fd3" stroke-width="1"/><rect x="0.5" y="9" width="3.6" height="3.5" fill="none" stroke="#4a8fd3"/><rect x="5.2" y="9" width="3.6" height="3.5" fill="none" stroke="#4a8fd3"/><rect x="9.9" y="9" width="3.6" height="3.5" fill="none" stroke="#4a8fd3"/></svg>
<span style="top:121px;font-size:12px;line-height:16px;color:#000;left:1261px;">图</span>
<div style="left:1131px;top:141px;width:765px;height:863px;background:#7dbbfb;"></div>
<div style="left:1134px;top:146px;width:593px;height:22px;background:#fff;border:1px solid #c6dcf3;box-sizing:border-box;"></div>
<svg style="left:1139px;top:152px;" width="14" height="11" viewBox="0 0 14 11"><rect x="0.5" y="0.5" width="13" height="10" fill="#fff" stroke="#3a7ebf"/><rect x="0" y="0" width="14" height="3.5" fill="#3a7ebf"/><path d="M0 7.25H14M7 3V11" stroke="#3a7ebf" stroke-width="1.1" fill="none"/></svg>
<span style="top:149px;font-size:12px;line-height:16px;color:#2f9a2f;left:1156px;letter-spacing:-0.672px;">Show SQL</span>
<div style="left:1215px;top:149px;width:1px;height:16px;background:#9a9a9a;"></div>
<svg style="left:1219px;top:150px;" width="15" height="15" viewBox="0 0 15 15"><path d="M0.5 4V0.5H4M11 0.5H14.5V4M14.5 11V14.5H11M4 14.5H0.5V11M0.5 0.5L4.5 4.5M14.5 0.5L10.5 4.5M14.5 14.5L10.5 10.5M0.5 14.5L4.5 10.5" fill="none" stroke="#666" stroke-width="1"/></svg>
<span style="top:149.5px;font-size:12px;line-height:16px;color:#a3a3a3;left:1241px;letter-spacing:0.255px;">输入一个 SQL 表达式来过滤结果 (使用 Ctrl+Space)</span>
<svg style="left:1688px;top:151px;" width="7" height="11" viewBox="0 0 7 11"><path d="M0 0L7 5.5L0 11Z" fill="#6a6a6a"/></svg>
<div style="left:1707px;top:149px;width:1px;height:16px;background:#7a7a7a;"></div>
<svg style="left:1712px;top:155px;" width="8" height="5" viewBox="0 0 8 5"><path d="M0 0H8L4 5Z" fill="#555"/></svg>
<svg style="left:1738px;top:150px;" width="15" height="14" viewBox="0 0 15 14"><path d="M8.5 0.8L13.8 6L7.8 12H4.5L1 8.5Z" fill="#dcebfb" stroke="#2f7fc1" stroke-width="1.1"/><path d="M4.2 5.2L9.5 10.5" stroke="#2f7fc1" stroke-width="1"/><path d="M9 13.5H14" stroke="#2f7fc1" stroke-width="1"/></svg>
<svg style="left:1760px;top:155px;" width="8" height="4" viewBox="0 0 8 4"><path d="M0 0H8L4 4Z" fill="#111"/></svg>
<svg style="left:1777px;top:150px;" width="13" height="13" viewBox="0 0 13 13"><path d="M0.6 0.6H12.4L7.8 6.5V12L5.2 10.5V6.5Z" fill="none" stroke="#2f7fc1" stroke-width="1.1"/></svg>
<svg style="left:1801px;top:155px;" width="8" height="4" viewBox="0 0 8 4"><path d="M0 0H8L4 4Z" fill="#111"/></svg>
<svg style="left:1818px;top:151px;" width="14" height="11" viewBox="0 0 14 11"><path d="M5.5 0.6L0.6 5.5L5.5 10.4V7.5H13.4V3.5H5.5Z" fill="none" stroke="#a3c9f2" stroke-width="1.1"/></svg>
<svg style="left:1841px;top:155px;" width="8" height="4" viewBox="0 0 8 4"><path d="M0 0H8L4 4Z" fill="#6c97c6"/></svg>
<svg style="left:1857px;top:151px;" width="14" height="11" viewBox="0 0 14 11"><path d="M8.5 0.6L13.4 5.5L8.5 10.4V7.5H0.6V3.5H8.5Z" fill="none" stroke="#a3c9f2" stroke-width="1.1"/></svg>
<svg style="left:1880px;top:155px;" width="8" height="4" viewBox="0 0 8 4"><path d="M0 0H8L4 4Z" fill="#6c97c6"/></svg>
<div style="left:1133px;top:172px;width:22px;height:61px;background:#73aef0;border:1px solid #6aa3e0;box-sizing:border-box;"></div>
<span style="left:1114px;top:182px;width:60px;height:16px;line-height:16px;text-align:center;font-size:13px;color:#000;transform:rotate(-90deg)">网格</span>
<svg style="left:1137px;top:211px;" width="14" height="14" viewBox="0 0 14 14"><path d="M0.5 0.5H13.5V13.5H0.5ZM0.5 4.8H13.5M0.5 9.2H13.5M4.8 0.5V13.5M9.2 0.5V13.5" fill="none" stroke="#4a8fd3" stroke-width="1"/></svg>
<span style="left:1114px;top:242px;width:60px;height:16px;line-height:16px;text-align:center;font-size:13px;color:#000;transform:rotate(-90deg)">文本</span>
<svg style="left:1138px;top:268px;" width="12" height="14" viewBox="0 0 12 14"><path d="M0.5 2.5V0.5H8.5V2.5M4.5 0.5V10.5M2.5 10.5H6.5" fill="none" stroke="#4f93dc" stroke-width="1"/><path d="M9 7.5L11.5 10L9 12.5L6.5 10Z" fill="none" stroke="#4f93dc" stroke-width="0.9"/></svg>
<span style="left:1114px;top:895px;width:60px;height:16px;line-height:16px;text-align:center;font-size:13px;color:#000;transform:rotate(-90deg)">记录</span>
<svg style="left:1136px;top:920px;" width="15" height="14" viewBox="0 0 15 14"><rect x="0.6" y="3.6" width="11" height="9.8" fill="none" stroke="#3f7fc0" stroke-width="1.1"/><path d="M3 3.5V1H12" fill="none" stroke="#3f7fc0" stroke-width="1.1"/><circle cx="11.5" cy="3.5" r="3" fill="#3f7fc0"/></svg>
<div style="left:1160px;top:172px;width:605px;height:754px;background:#fff;"></div>
<div style="left:1200px;top:172px;width:230px;height:27px;background:#74b1f1;"></div>
<div style="left:1160px;top:199px;width:40px;height:19px;background:#6aacef;"></div>
<div style="left:1200px;top:199px;width:90px;height:19px;background:#b9dafc;"></div>
<div style="left:1430px;top:199px;width:335px;height:19px;background:#e6f1fd;"></div>
<div style="left:1200px;top:218px;width:565px;height:1px;background:#eeeeee;"></div>
<div style="left:1160px;top:218px;width:40px;height:1px;background:#6b6b6b;"></div>
<div style="left:1200px;top:237px;width:565px;height:1px;background:#eeeeee;"></div>
<div style="left:1160px;top:237px;width:40px;height:1px;background:#6b6b6b;"></div>
<div style="left:1200px;top:256px;width:565px;height:1px;background:#eeeeee;"></div>
<div style="left:1160px;top:256px;width:40px;height:1px;background:#6b6b6b;"></div>
<div style="left:1200px;top:275px;width:565px;height:1px;background:#eeeeee;"></div>
<div style="left:1160px;top:275px;width:40px;height:1px;background:#6b6b6b;"></div>
<div style="left:1200px;top:294px;width:565px;height:1px;background:#eeeeee;"></div>
<div style="left:1160px;top:294px;width:40px;height:1px;background:#6b6b6b;"></div>
<div style="left:1200px;top:313px;width:565px;height:1px;background:#eeeeee;"></div>
<div style="left:1160px;top:313px;width:40px;height:1px;background:#6b6b6b;"></div>
<div style="left:1200px;top:332px;width:565px;height:1px;background:#eeeeee;"></div>
<div style="left:1160px;top:332px;width:40px;height:1px;background:#6b6b6b;"></div>
<div style="left:1200px;top:351px;width:565px;height:1px;background:#eeeeee;"></div>
<div style="left:1160px;top:351px;width:40px;height:1px;background:#6b6b6b;"></div>
<div style="left:1200px;top:370px;width:565px;height:1px;background:#eeeeee;"></div>
<div style="left:1160px;top:370px;width:40px;height:1px;background:#6b6b6b;"></div>
<div style="left:1200px;top:389px;width:565px;height:1px;background:#eeeeee;"></div>
<div style="left:1160px;top:389px;width:40px;height:1px;background:#6b6b6b;"></div>
<div style="left:1200px;top:408px;width:565px;height:1px;background:#eeeeee;"></div>
<div style="left:1160px;top:408px;width:40px;height:1px;background:#6b6b6b;"></div>
<div style="left:1200px;top:427px;width:565px;height:1px;background:#eeeeee;"></div>
<div style="left:1160px;top:427px;width:40px;height:1px;background:#6b6b6b;"></div>
<div style="left:1200px;top:446px;width:565px;height:1px;background:#eeeeee;"></div>
<div style="left:1160px;top:446px;width:40px;height:1px;background:#6b6b6b;"></div>
<div style="left:1200px;top:465px;width:565px;height:1px;background:#eeeeee;"></div>
<div style="left:1160px;top:465px;width:40px;height:1px;background:#6b6b6b;"></div>
<div style="left:1200px;top:484px;width:565px;height:1px;background:#eeeeee;"></div>
<div style="left:1160px;top:484px;width:40px;height:1px;background:#6b6b6b;"></div>
<div style="left:1200px;top:503px;width:565px;height:1px;background:#eeeeee;"></div>
<div style="left:1160px;top:503px;width:40px;height:1px;background:#6b6b6b;"></div>
<div style="left:1200px;top:522px;width:565px;height:1px;background:#eeeeee;"></div>
<div style="left:1160px;top:522px;width:40px;height:1px;background:#6b6b6b;"></div>
<div style="left:1200px;top:541px;width:565px;height:1px;background:#eeeeee;"></div>
<div style="left:1160px;top:541px;width:40px;height:1px;background:#6b6b6b;"></div>
<div style="left:1200px;top:560px;width:565px;height:1px;background:#eeeeee;"></div>
<div style="left:1160px;top:560px;width:40px;height:1px;background:#6b6b6b;"></div>
<div style="left:1200px;top:579px;width:565px;height:1px;background:#eeeeee;"></div>
<div style="left:1160px;top:579px;width:40px;height:1px;background:#6b6b6b;"></div>
<div style="left:1200px;top:598px;width:565px;height:1px;background:#eeeeee;"></div>
<div style="left:1160px;top:598px;width:40px;height:1px;background:#6b6b6b;"></div>
<div style="left:1200px;top:617px;width:565px;height:1px;background:#eeeeee;"></div>
<div style="left:1160px;top:617px;width:40px;height:1px;background:#6b6b6b;"></div>
<div style="left:1200px;top:636px;width:565px;height:1px;background:#eeeeee;"></div>
<div style="left:1160px;top:636px;width:40px;height:1px;background:#6b6b6b;"></div>
<div style="left:1200px;top:655px;width:565px;height:1px;background:#eeeeee;"></div>
<div style="left:1160px;top:655px;width:40px;height:1px;background:#6b6b6b;"></div>
<div style="left:1200px;top:674px;width:565px;height:1px;background:#eeeeee;"></div>
<div style="left:1160px;top:674px;width:40px;height:1px;background:#6b6b6b;"></div>
<div style="left:1200px;top:693px;width:565px;height:1px;background:#eeeeee;"></div>
<div style="left:1160px;top:693px;width:40px;height:1px;background:#6b6b6b;"></div>
<div style="left:1200px;top:712px;width:565px;height:1px;background:#eeeeee;"></div>
<div style="left:1160px;top:712px;width:40px;height:1px;background:#6b6b6b;"></div>
<div style="left:1200px;top:731px;width:565px;height:1px;background:#eeeeee;"></div>
<div style="left:1160px;top:731px;width:40px;height:1px;background:#6b6b6b;"></div>
<div style="left:1200px;top:750px;width:565px;height:1px;background:#eeeeee;"></div>
<div style="left:1160px;top:750px;width:40px;height:1px;background:#6b6b6b;"></div>
<div style="left:1200px;top:769px;width:565px;height:1px;background:#eeeeee;"></div>
<div style="left:1160px;top:769px;width:40px;height:1px;background:#6b6b6b;"></div>
<div style="left:1200px;top:788px;width:565px;height:1px;background:#eeeeee;"></div>
<div style="left:1160px;top:788px;width:40px;height:1px;background:#6b6b6b;"></div>
<div style="left:1200px;top:807px;width:565px;height:1px;background:#eeeeee;"></div>
<div style="left:1160px;top:807px;width:40px;height:1px;background:#6b6b6b;"></div>
<div style="left:1200px;top:826px;width:565px;height:1px;background:#eeeeee;"></div>
<div style="left:1160px;top:826px;width:40px;height:1px;background:#6b6b6b;"></div>
<div style="left:1200px;top:845px;width:565px;height:1px;background:#eeeeee;"></div>
<div style="left:1160px;top:845px;width:40px;height:1px;background:#6b6b6b;"></div>
<div style="left:1200px;top:864px;width:565px;height:1px;background:#eeeeee;"></div>
<div style="left:1160px;top:864px;width:40px;height:1px;background:#6b6b6b;"></div>
<div style="left:1200px;top:883px;width:565px;height:1px;background:#eeeeee;"></div>
<div style="left:1160px;top:883px;width:40px;height:1px;background:#6b6b6b;"></div>
<div style="left:1200px;top:902px;width:565px;height:1px;background:#eeeeee;"></div>
<div style="left:1160px;top:902px;width:40px;height:1px;background:#6b6b6b;"></div>
<div style="left:1200px;top:921px;width:565px;height:1px;background:#eeeeee;"></div>
<div style="left:1160px;top:921px;width:40px;height:1px;background:#6b6b6b;"></div>
<div style="left:1290px;top:199px;width:1px;height:727px;background:#e9e9e9;"></div>
<div style="left:1430px;top:199px;width:1px;height:727px;background:#e9e9e9;"></div>
<div style="left:1571px;top:199px;width:1px;height:727px;background:#e9e9e9;"></div>
<div style="left:1709px;top:199px;width:1px;height:727px;background:#e9e9e9;"></div>
<div style="left:1160px;top:199px;width:605px;height:1px;background:#5d6670;"></div>
<div style="left:1199px;top:172px;width:1px;height:754px;background:#5d6670;"></div>
<div style="left:1290px;top:172px;width:1px;height:27px;background:#5d6670;"></div>
<div style="left:1430px;top:172px;width:1px;height:27px;background:#5d6670;"></div>
<div style="left:1571px;top:172px;width:1px;height:27px;background:#5d6670;"></div>
<div style="left:1709px;top:172px;width:1px;height:27px;background:#5d6670;"></div>
<svg style="left:1183px;top:180px;" width="11" height="11" viewBox="0 0 11 11"><circle cx="5.5" cy="5.5" r="4.6" fill="#fff" stroke="#4caf50" stroke-width="1.2"/><circle cx="5.5" cy="5.5" r="2.1" fill="#4caf50"/></svg>
<span style="top:175.5px;font-size:10.5px;line-height:16px;color:#b3d0f0;left:1205px;letter-spacing:-0.510px;">123</span>
<svg style="left:1226px;top:180px;" width="8" height="6" viewBox="0 0 8 6"><circle cx="5.5" cy="3" r="2.2" fill="none" stroke="#e9a83c" stroke-width="1.2"/><path d="M0 3H3.5M1 3V5" stroke="#e9a83c" stroke-width="1.2"/></svg>
<span style="top:175.5px;font-size:12px;line-height:16px;color:#000;left:1236px;letter-spacing:-1.000px;">ID</span>
<svg style="left:1271px;top:182px;" width="10" height="5" viewBox="0 0 10 5"><path d="M0 0H10L5 5Z" fill="#2f7fc1"/></svg>
<span style="top:175.5px;font-size:11px;line-height:16px;color:#b3d0f0;left:1298px;letter-spacing:-0.911px;">A·Z</span>
<span style="top:175.5px;font-size:12px;line-height:16px;color:#000;left:1316px;letter-spacing:-0.603px;">EMAIL</span>
<svg style="left:1411px;top:182px;" width="10" height="5" viewBox="0 0 10 5"><path d="M0 0H10L5 5Z" fill="#2f7fc1"/></svg>
<span style="top:175.5px;font-size:11px;line-height:16px;color:#3f86c0;left:1438px;letter-spacing:-0.911px;">A·Z</span>
<span style="top:175.5px;font-size:12px;line-height:16px;color:#000;left:1456px;letter-spacing:-0.802px;">FIRST_NAME</span>
<svg style="left:1553px;top:182px;" width="10" height="5" viewBox="0 0 10 5"><path d="M0 0H10L5 5Z" fill="#2f7fc1"/></svg>
<span style="top:175.5px;font-size:11px;line-height:16px;color:#3f86c0;left:1578px;letter-spacing:-0.911px;">A·Z</span>
<span style="top:175.5px;font-size:12px;line-height:16px;color:#000;left:1596px;letter-spacing:-0.707px;">LAST_NAME</span>
<svg style="left:1691px;top:182px;" width="10" height="5" viewBox="0 0 10 5"><path d="M0 0H10L5 5Z" fill="#2f7fc1"/></svg>
<div style="left:1710px;top:172px;width:55px;height:27px;overflow:hidden"><span style="position:absolute;left:7px;top:3.5px;font-size:11px;line-height:16px;color:#3f86c0;letter-spacing:-1px">A·Z</span><span style="position:absolute;left:25px;top:3.5px;font-size:12px;line-height:16px;letter-spacing:-0.2px">PASSWORD</span></div>
<span style="top:201.5px;font-size:12px;line-height:16px;color:#000;left:1164px;">1</span>
<span style="top:201.5px;font-size:12px;line-height:16px;color:#000;left:1205px;">1</span>
<span style="top:220.5px;font-size:12px;line-height:16px;color:#000;left:1164px;">2</span>
<div style="left:1291px;top:199.5px;width:140px;height:18.5px;background:#f4f8fd;border:1.5px solid #111;box-sizing:border-box;"></div>
<div style="left:1296px;top:203px;width:128px;height:11px;background:#bcc0c8;filter:blur(2.5px);"></div>
<div style="left:1437px;top:205px;width:22px;height:8px;background:#c9cdd6;filter:blur(2.5px);"></div>
<div style="left:1576px;top:205px;width:18px;height:8px;background:#c9cdd6;filter:blur(2.5px);"></div>
<div style="left:1714px;top:203px;width:40px;height:11px;background:#b9bdc6;filter:blur(2.5px);"></div>
<span style="top:201.5px;font-size:12px;line-height:16px;color:#000;left:1756px;">u</span>
<div style="left:1207px;top:222px;width:46px;height:11px;background:#c4c7cd;filter:blur(2.5px);"></div>
<span style="top:220.5px;font-size:12px;line-height:16px;color:#000;left:1296px;letter-spacing:-0.060px;">internal@metabase.com</span>
<span style="top:220.5px;font-size:12px;line-height:16px;color:#000;left:1437px;letter-spacing:-0.213px;">Metabase</span>
<span style="top:220.5px;font-size:12px;line-height:16px;color:#000;left:1577px;">Internal</span>
<div style="left:1710px;top:219px;width:55px;height:18px;overflow:hidden"><span style="position:absolute;left:5px;top:1px;font-size:12px;line-height:16px;letter-spacing:-0.35px">$2a$10$oX</span></div>
<div style="left:1160px;top:926px;width:605px;height:17px;background:#f1f1f1;"></div>
<div style="left:1176px;top:933.5px;width:80px;height:2px;background:#6e6e6e;"></div>
<svg style="left:0px;top:0px;pointer-events:none;" width="1896" height="1007" viewBox="0 0 1896 1007"><path d="M1320 211.5L1323.8 235L1316 239L1260 395L1308.5 245.5L1305.5 244Z" fill="#e8212b"/></svg>
<div style="left:1775px;top:172px;width:92px;height:771px;background:#fff;"></div>
<div style="left:1775px;top:172px;width:92px;height:26px;background:#f3f6fa;"></div>
<div style="left:1776px;top:172px;width:27px;height:26px;background:#fbfcfe;"></div>
<div style="left:1776px;top:172px;width:27px;height:2px;background:#3f8fe6;"></div>
<div style="left:1802px;top:174px;width:1px;height:24px;background:#d4dfea;"></div>
<svg style="left:1784px;top:181px;" width="10" height="10" viewBox="0 0 10 10"><path d="M0.5 0.5L9.5 9.5M9.5 0.5L0.5 9.5" stroke="#9a9a9a" stroke-width="1" fill="none"/></svg>
<span style="top:174.5px;font-size:13px;line-height:16px;color:#000;left:1810px;font-weight:bold;">»</span>
<span style="top:179.5px;font-size:8px;line-height:16px;color:#000;left:1817px;">2</span>
<div style="left:1846px;top:180px;width:10px;height:4px;border:1.5px solid #111;box-sizing:border-box;"></div>
<div style="left:1775px;top:198px;width:92px;height:31px;background:#7dbbfb;"></div>
<svg style="left:1783px;top:207px;" width="13" height="13" viewBox="0 0 13 13"><path d="M6.5 0.5V12.5M0.5 6.5H12.5" stroke="#3aa43a" stroke-width="2"/></svg>
<span style="top:206px;font-size:12px;line-height:16px;color:#000;left:1801px;letter-spacing:0.492px;">添加</span>
<div style="left:1853px;top:206.0px;width:3.5px;height:3.5px;border:1px solid #4a4a4a;box-sizing:border-box;border-radius:50%;"></div>
<div style="left:1853px;top:211.5px;width:3.5px;height:3.5px;border:1px solid #4a4a4a;box-sizing:border-box;border-radius:50%;"></div>
<div style="left:1853px;top:217.0px;width:3.5px;height:3.5px;border:1px solid #4a4a4a;box-sizing:border-box;border-radius:50%;"></div>
<span style="top:232.5px;font-size:12px;line-height:16px;color:#000;left:1781px;letter-spacing:-0.008px;">函数</span>
<svg style="left:1781px;top:260px;" width="10" height="6" viewBox="0 0 10 6"><path d="M1 1L5 5L9 1" fill="none" stroke="#222" stroke-width="1.6"/></svg>
<span style="top:255px;font-size:10.5px;line-height:16px;color:#3f86c0;left:1793px;letter-spacing:-0.510px;">123</span>
<span style="top:255px;font-size:12px;line-height:16px;color:#000;left:1815px;letter-spacing:-0.500px;">ID</span>
<div style="left:1775px;top:272px;width:90px;height:1px;background:#e9e9e9;"></div>
<div style="left:1775px;top:292px;width:90px;height:1px;background:#e9e9e9;"></div>
<div style="left:1775px;top:312px;width:90px;height:1px;background:#e9e9e9;"></div>
<div style="left:1775px;top:332px;width:90px;height:1px;background:#e9e9e9;"></div>
<div style="left:1775px;top:352px;width:90px;height:1px;background:#e9e9e9;"></div>
<div style="left:1775px;top:372px;width:90px;height:1px;background:#e9e9e9;"></div>
<div style="left:1775px;top:392px;width:90px;height:1px;background:#e9e9e9;"></div>
<div style="left:1775px;top:412px;width:90px;height:1px;background:#e9e9e9;"></div>
<div style="left:1775px;top:432px;width:90px;height:1px;background:#e9e9e9;"></div>
<div style="left:1775px;top:452px;width:90px;height:1px;background:#e9e9e9;"></div>
<div style="left:1775px;top:472px;width:90px;height:1px;background:#e9e9e9;"></div>
<div style="left:1775px;top:492px;width:90px;height:1px;background:#e9e9e9;"></div>
<div style="left:1775px;top:512px;width:90px;height:1px;background:#e9e9e9;"></div>
<div style="left:1775px;top:532px;width:90px;height:1px;background:#e9e9e9;"></div>
<div style="left:1775px;top:552px;width:90px;height:1px;background:#e9e9e9;"></div>
<div style="left:1775px;top:572px;width:90px;height:1px;background:#e9e9e9;"></div>
<div style="left:1775px;top:592px;width:90px;height:1px;background:#e9e9e9;"></div>
<div style="left:1775px;top:612px;width:90px;height:1px;background:#e9e9e9;"></div>
<div style="left:1775px;top:632px;width:90px;height:1px;background:#e9e9e9;"></div>
<div style="left:1775px;top:652px;width:90px;height:1px;background:#e9e9e9;"></div>
<div style="left:1775px;top:672px;width:90px;height:1px;background:#e9e9e9;"></div>
<div style="left:1775px;top:692px;width:90px;height:1px;background:#e9e9e9;"></div>
<div style="left:1775px;top:712px;width:90px;height:1px;background:#e9e9e9;"></div>
<div style="left:1775px;top:732px;width:90px;height:1px;background:#e9e9e9;"></div>
<div style="left:1775px;top:752px;width:90px;height:1px;background:#e9e9e9;"></div>
<div style="left:1775px;top:772px;width:90px;height:1px;background:#e9e9e9;"></div>
<div style="left:1775px;top:792px;width:90px;height:1px;background:#e9e9e9;"></div>
<div style="left:1775px;top:812px;width:90px;height:1px;background:#e9e9e9;"></div>
<div style="left:1775px;top:832px;width:90px;height:1px;background:#e9e9e9;"></div>
<div style="left:1775px;top:852px;width:90px;height:1px;background:#e9e9e9;"></div>
<div style="left:1775px;top:872px;width:90px;height:1px;background:#e9e9e9;"></div>
<div style="left:1775px;top:892px;width:90px;height:1px;background:#e9e9e9;"></div>
<div style="left:1775px;top:912px;width:90px;height:1px;background:#e9e9e9;"></div>
<span style="top:275px;font-size:12px;line-height:16px;color:#000;left:1831px;letter-spacing:0.394px;">Count</span>
<span style="top:295px;font-size:12px;line-height:16px;color:#000;left:1831px;letter-spacing:0.394px;">Count</span>
<div style="left:1831px;top:314px;width:36px;height:18px;overflow:hidden"><span style="position:absolute;left:0;top:0.5px;font-size:12px;line-height:16px;letter-spacing:0.25px">Average</span></div>
<span style="top:335px;font-size:12px;line-height:16px;color:#000;left:1831px;letter-spacing:0.104px;">Sum</span>
<div style="left:1775px;top:926px;width:92px;height:17px;background:#f1f1f1;"></div>
<div style="left:1792px;top:933.5px;width:32px;height:2px;background:#6e6e6e;"></div>
<div style="left:1874px;top:172px;width:21px;height:59px;background:#73aef0;border:1px solid #6aa3e0;box-sizing:border-box;"></div>
<svg style="left:1878px;top:176px;" width="14" height="16" viewBox="0 0 14 16"><rect x="3.5" y="0.5" width="10" height="13" fill="none" stroke="#3f86d0"/><path d="M3.5 5H13.5M8.5 0.5V13.5" stroke="#3f86d0"/><circle cx="4" cy="10" r="3" fill="#73aef0" stroke="#fff" stroke-width="1.2" stroke-dasharray="1.2 1"/></svg>
<span style="left:1854.5px;top:202px;width:60px;height:16px;line-height:16px;text-align:center;font-size:13px;color:#000;transform:rotate(90deg)">面板</span>
<svg style="left:1877px;top:233px;" width="15" height="14" viewBox="0 0 15 14"><rect x="0.5" y="0.5" width="14" height="13" fill="#e9f3fd" stroke="#3f86d0"/><rect x="0.5" y="0.5" width="14" height="5" fill="#3f86d0"/><path d="M2 3H4M6 3H8M10 3H12" stroke="#fff" stroke-width="1.2"/></svg>
<div style="left:1875px;top:253px;width:20px;height:21px;background:#79b3f3;border:1px solid #6fa8e6;box-sizing:border-box;"></div>
<svg style="left:1878px;top:256px;" width="15" height="15" viewBox="0 0 15 15"><circle cx="7.5" cy="7.5" r="6.5" fill="none" stroke="#5f9fe6" stroke-width="1.2"/><circle cx="5.2" cy="5.5" r="1" fill="#5f9fe6"/><circle cx="9.8" cy="5.5" r="1" fill="#5f9fe6"/><circle cx="5.2" cy="9.5" r="1" fill="#5f9fe6"/><circle cx="9.8" cy="9.5" r="1" fill="#5f9fe6"/></svg>
<svg style="left:1877px;top:277px;" width="15" height="17" viewBox="0 0 15 17"><rect x="0.5" y="6.5" width="14" height="10" fill="#fff" stroke="#3f86d0"/><path d="M0.5 10H14.5M0.5 13.3H14.5M5 6.5V16.5M10 6.5V16.5" stroke="#3f86d0"/><path d="M6.5 0L8.5 0L9 12H6Z" fill="#e8962e"/></svg>
<div style="left:1875px;top:297px;width:20px;height:22px;background:#79b3f3;border:1px solid #6fa8e6;box-sizing:border-box;"></div>
<svg style="left:1878px;top:300px;" width="15" height="15" viewBox="0 0 15 15"><rect x="0.5" y="0.5" width="14" height="14" fill="#fff" stroke="#2f7fc1"/><rect x="0.5" y="0.5" width="14" height="4" fill="#2f7fc1"/><rect x="0.5" y="8" width="7" height="6.5" fill="#2f7fc1"/><path d="M9.5 11H13.5M9.5 9.5V12.5M13.5 9.5V12.5" stroke="#2f7fc1" stroke-width="1"/></svg>
<div style="left:1875px;top:320px;width:20px;height:22px;background:#79b3f3;border:1px solid #6fa8e6;box-sizing:border-box;"></div>
<svg style="left:1878px;top:324px;" width="14" height="14" viewBox="0 0 14 14"><rect x="0" y="0" width="6" height="6" fill="#3f86d0"/><rect x="8" y="0" width="6" height="6" fill="#3f86d0"/><rect x="0" y="8" width="6" height="6" fill="#3f86d0"/><rect x="8" y="8" width="6" height="6" fill="#e8b23a"/><path d="M1.5 3H4.5M9.5 3H12.5M11 1.5V4.5M1.8 9.8L4.2 12.2M4.2 9.8L1.8 12.2M9.5 10H12.5M9.5 12H12.5" stroke="#fff" stroke-width="1"/></svg>
<svg style="left:1878px;top:925px;" width="13" height="15" viewBox="0 0 13 15"><rect x="0.5" y="0.5" width="4" height="14" fill="none" stroke="#3f86d0" stroke-width="1.1"/><path d="M7 14.5H12.5M7 10H12.5M7 5.5H12.5" stroke="#3f86d0" stroke-width="1.1" stroke-dasharray="2 1.2"/><path d="M8 3L10 1L12 3" fill="none" stroke="#3f86d0"/></svg>
<svg style="left:1139px;top:953px;" width="15" height="14" viewBox="0 0 15 14"><path d="M1 6.2Q1.5 2.2 6 2.2H9.5M7.5 0.2L9.8 2.2L7.5 4.4" fill="none" stroke="#4a86c8" stroke-width="1.1"/><path d="M14 7.8Q13.5 11.8 9 11.8H5.5M7.5 9.6L5.2 11.8L7.5 13.8" fill="none" stroke="#4a86c8" stroke-width="1.1"/><path d="M10.5 4.5L13.5 7.8M3.5 9.5L1 6.2" fill="none" stroke="#4a86c8" stroke-width="1.1"/></svg>
<span style="top:952.5px;font-size:12px;line-height:16px;color:#000;left:1158px;letter-spacing:0.992px;">刷新</span>
<svg style="left:1197px;top:958px;" width="8" height="4" viewBox="0 0 8 4"><path d="M0 0H8L4 4Z" fill="#111"/></svg>
<svg style="left:1214px;top:951px;" width="2" height="18" viewBox="0 0 2 18"><rect x="0" y="0" width="1.6" height="1.6" fill="#dfe3dc"/><rect x="0" y="3" width="1.6" height="1.6" fill="#dfe3dc"/><rect x="0" y="6" width="1.6" height="1.6" fill="#dfe3dc"/><rect x="0" y="9" width="1.6" height="1.6" fill="#dfe3dc"/><rect x="0" y="12" width="1.6" height="1.6" fill="#dfe3dc"/><rect x="0" y="15" width="1.6" height="1.6" fill="#dfe3dc"/></svg>
<svg style="left:1227px;top:953px;" width="14" height="14" viewBox="0 0 14 14"><circle cx="7" cy="7" r="6.2" fill="none" stroke="#9bb2ca" stroke-width="1.1"/><path d="M4 7L6.3 9.5L10.3 4.5" fill="none" stroke="#9bb2ca" stroke-width="1.1"/></svg>
<span style="top:952.5px;font-size:12px;line-height:16px;color:#90a8c1;left:1245px;letter-spacing:0.992px;text-shadow:0 0 0.8px #90a8c1;">保存</span>
<svg style="left:1283px;top:958px;" width="8" height="4" viewBox="0 0 8 4"><path d="M0 0H8L4 4Z" fill="#6c97c6"/></svg>
<svg style="left:1300px;top:953px;" width="14" height="14" viewBox="0 0 14 14"><rect x="0.6" y="0.6" width="12.8" height="12.8" fill="none" stroke="#9bb2ca" stroke-width="1.1"/><path d="M4 4L10 10M10 4L4 10" stroke="#9bb2ca" stroke-width="1.1"/></svg>
<span style="top:952.5px;font-size:12px;line-height:16px;color:#90a8c1;left:1319px;letter-spacing:0.992px;text-shadow:0 0 0.8px #90a8c1;">取消</span>
<svg style="left:1354px;top:951px;" width="2" height="18" viewBox="0 0 2 18"><rect x="0" y="0" width="1.6" height="1.6" fill="#dfe3dc"/><rect x="0" y="3" width="1.6" height="1.6" fill="#dfe3dc"/><rect x="0" y="6" width="1.6" height="1.6" fill="#dfe3dc"/><rect x="0" y="9" width="1.6" height="1.6" fill="#dfe3dc"/><rect x="0" y="12" width="1.6" height="1.6" fill="#dfe3dc"/><rect x="0" y="15" width="1.6" height="1.6" fill="#dfe3dc"/></svg>
<svg style="left:1362px;top:954px;" width="14" height="12" viewBox="0 0 14 12"><path d="M0 1.5H12M0 5.5H9M2 9.5H8" stroke="#9bb2ca" stroke-width="1.2"/><path d="M10 7L13 10L10 12" fill="none" stroke="#9bb2ca" stroke-width="1"/></svg>
<svg style="left:1385px;top:954px;" width="14" height="12" viewBox="0 0 14 12"><path d="M0 1.5H12M0 5.5H9M2 9.5H8" stroke="#9bb2ca" stroke-width="1.2"/><path d="M10 7L13 10L10 12" fill="none" stroke="#9bb2ca" stroke-width="1"/></svg>
<svg style="left:1409px;top:954px;" width="14" height="12" viewBox="0 0 14 12"><path d="M0 1.5H12M0 5.5H9M2 9.5H8" stroke="#9bb2ca" stroke-width="1.2"/><path d="M10 7L13 10L10 12" fill="none" stroke="#9bb2ca" stroke-width="1"/></svg>
<svg style="left:1434px;top:954px;" width="14" height="12" viewBox="0 0 14 12"><path d="M0 1.5H12M0 5.5H9M2 9.5H8" stroke="#9bb2ca" stroke-width="1.2"/><path d="M10 7L13 10L10 12" fill="none" stroke="#9bb2ca" stroke-width="1"/></svg>
<svg style="left:1458px;top:951px;" width="2" height="18" viewBox="0 0 2 18"><rect x="0" y="0" width="1.6" height="1.6" fill="#dfe3dc"/><rect x="0" y="3" width="1.6" height="1.6" fill="#dfe3dc"/><rect x="0" y="6" width="1.6" height="1.6" fill="#dfe3dc"/><rect x="0" y="9" width="1.6" height="1.6" fill="#dfe3dc"/><rect x="0" y="12" width="1.6" height="1.6" fill="#dfe3dc"/><rect x="0" y="15" width="1.6" height="1.6" fill="#dfe3dc"/></svg>
<svg style="left:1471px;top:954px;" width="10" height="12" viewBox="0 0 10 12"><path d="M1 0V12M9 1L3.5 6L9 11" fill="none" stroke="#9bb2ca" stroke-width="1.2"/></svg>
<svg style="left:1492px;top:954px;" width="8" height="12" viewBox="0 0 8 12"><path d="M7 1L1.5 6L7 11" fill="none" stroke="#9bb2ca" stroke-width="1.2"/></svg>
<svg style="left:1514px;top:954px;" width="8" height="12" viewBox="0 0 8 12"><path d="M1 1L6.5 6L1 11" fill="none" stroke="#9bb2ca" stroke-width="1.2"/></svg>
<svg style="left:1537px;top:954px;" width="10" height="12" viewBox="0 0 10 12"><path d="M9 0V12M1 1L6.5 6L1 11" fill="none" stroke="#9bb2ca" stroke-width="1.2"/></svg>
<svg style="left:1558px;top:953px;" width="14" height="14" viewBox="0 0 14 14"><path d="M0.6 4V0.6H4M10 0.6H13.4V4M13.4 10V13.4H10M4 13.4H0.6V10" fill="none" stroke="#9bb2ca" stroke-width="1.1"/><rect x="4" y="4" width="6" height="6" fill="none" stroke="#9bb2ca"/></svg>
<svg style="left:1586px;top:951px;" width="2" height="18" viewBox="0 0 2 18"><rect x="0" y="0" width="1.6" height="1.6" fill="#dfe3dc"/><rect x="0" y="3" width="1.6" height="1.6" fill="#dfe3dc"/><rect x="0" y="6" width="1.6" height="1.6" fill="#dfe3dc"/><rect x="0" y="9" width="1.6" height="1.6" fill="#dfe3dc"/><rect x="0" y="12" width="1.6" height="1.6" fill="#dfe3dc"/><rect x="0" y="15" width="1.6" height="1.6" fill="#dfe3dc"/></svg>
<svg style="left:1598px;top:953px;" width="14" height="14" viewBox="0 0 14 14"><path d="M7 10V1.5M3.5 5L7 1.5L10.5 5M0.6 10V13.4H13.4V10" fill="none" stroke="#9bb2ca" stroke-width="1.2"/></svg>
<span style="top:952.5px;font-size:12px;line-height:16px;color:#90a8c1;left:1616px;letter-spacing:0.426px;text-shadow:0 0 0.8px #90a8c1;">导出数据...</span>
<svg style="left:1688px;top:958px;" width="8" height="4" viewBox="0 0 8 4"><path d="M0 0H8L4 4Z" fill="#5f7fa6"/></svg>
<svg style="left:1705px;top:951px;" width="2" height="18" viewBox="0 0 2 18"><rect x="0" y="0" width="1.6" height="1.6" fill="#dfe3dc"/><rect x="0" y="3" width="1.6" height="1.6" fill="#dfe3dc"/><rect x="0" y="6" width="1.6" height="1.6" fill="#dfe3dc"/><rect x="0" y="9" width="1.6" height="1.6" fill="#dfe3dc"/><rect x="0" y="12" width="1.6" height="1.6" fill="#dfe3dc"/><rect x="0" y="15" width="1.6" height="1.6" fill="#dfe3dc"/></svg>
<svg style="left:1712px;top:953px;" width="15" height="15" viewBox="0 0 15 15"><path d="M14.44 6.59L14.44 8.41L12.62 8.88L12.09 10.15L13.05 11.77L11.77 13.05L10.15 12.09L8.88 12.62L8.41 14.44L6.59 14.44L6.12 12.62L4.85 12.09L3.23 13.05L1.95 11.77L2.91 10.15L2.38 8.88L0.56 8.41L0.56 6.59L2.38 6.12L2.91 4.85L1.95 3.23L3.23 1.95L4.85 2.91L6.12 2.38L6.59 0.56L8.41 0.56L8.88 2.38L10.15 2.91L11.77 1.95L13.05 3.23L12.09 4.85L12.62 6.12Z" fill="none" stroke="#3f86d0" stroke-width="1"/><circle cx="7.5" cy="7.5" r="2.70" fill="none" stroke="#3f86d0" stroke-width="1"/></svg>
<div style="left:1735px;top:950px;width:54px;height:22px;background:#fff;border:1px solid #a9c8e8;box-sizing:border-box;"></div>
<span style="top:953px;font-size:12px;line-height:16px;color:#000;left:1740px;letter-spacing:-0.344px;">200</span>
<svg style="left:1796px;top:953px;" width="15" height="15" viewBox="0 0 15 15"><path d="M0.6 3V0.6H14.4V3M0.6 12V14.4H14.4V12M7.5 3.5V11.5M5 9L7.5 11.5L10 9" fill="none" stroke="#3f7fc0" stroke-width="1.1"/></svg>
<span style="top:953px;font-size:12px;line-height:16px;color:#000;left:1819px;">2</span>
<span style="top:983.5px;font-size:12px;line-height:16px;color:#333;left:1140px;">⋯</span>
<span style="top:981.5px;font-size:12px;line-height:16px;color:#000;left:1159px;letter-spacing:-0.260px;">2 行已获取 - 0.028s (0.027s 获取), 2026-02-26 14:56:05</span>
</body></html>
